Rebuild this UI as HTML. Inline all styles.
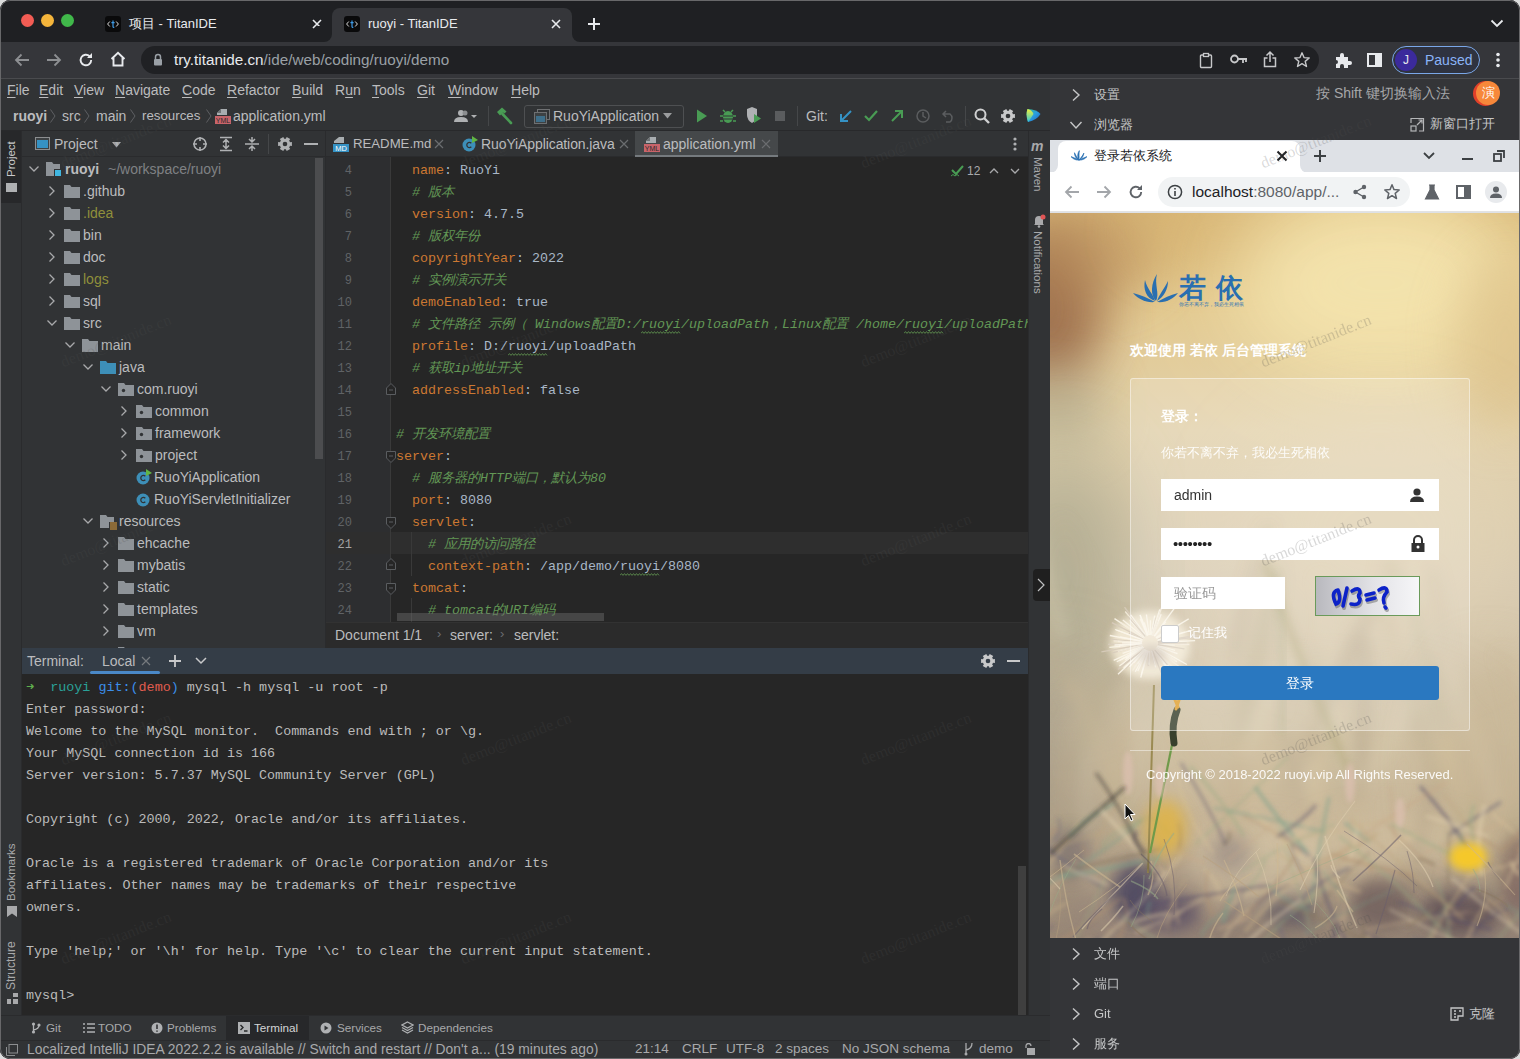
<!DOCTYPE html>
<html><head><meta charset="utf-8">
<style>
*{margin:0;padding:0;box-sizing:border-box}
html,body{width:1520px;height:1059px;overflow:hidden;background:#dcdcdc;font-family:"Liberation Sans",sans-serif;}
.a{position:absolute}
.mono{font-family:"Liberation Mono",monospace}
.ui{font-size:13px;color:#bbbcbe;white-space:nowrap}
svg{display:block}
</style></head><body>
<div id="root" class="a" style="left:0;top:0;width:1520px;height:1059px;border-radius:10px;overflow:hidden;background:#202124">

<!-- ===== Chrome tab strip ===== -->
<div id="tabstrip" class="a" style="left:0;top:0;width:1520px;height:42px;background:#1f2023;">
  <div class="a" style="left:21px;top:14px;width:13px;height:13px;border-radius:50%;background:#f25c54;"></div>
  <div class="a" style="left:41px;top:14px;width:13px;height:13px;border-radius:50%;background:#f5b53b;"></div>
  <div class="a" style="left:61px;top:14px;width:13px;height:13px;border-radius:50%;background:#40b84a;"></div>
  <!-- tab1 -->
  <div class="a" style="left:105px;top:16px;"><svg width="16" height="16"><rect width="16" height="16" rx="3" fill="#0a0a0b"/><path d="M4.8 5.5L2.6 8L4.8 10.5M11.2 5.5L13.4 8L11.2 10.5" stroke="#d8d8d8" stroke-width="1" fill="none"/><path d="M8 4.5V10.5Q8 11.6 9.3 11.4M6.4 6.6H9.6" stroke="#3f9be6" stroke-width="1.2" fill="none"/></svg></div>
  <div class="a ui" style="left:129px;top:16px;font-size:13px;line-height:16px;color:#e8eaed">项目 - TitanIDE</div>
  <div class="a" style="left:311px;top:18px;"><svg width="12" height="12"><path d="M2 2L10 10M10 2L2 10" stroke="#e8eaed" stroke-width="1.6"/></svg></div>
  <!-- tab2 active -->
  <div class="a" style="left:332px;top:8px;width:240px;height:34px;background:#35363a;border-radius:8px 8px 0 0;"></div>
  <div class="a" style="left:324px;top:34px;width:8px;height:8px;background:#35363a;"></div>
  <div class="a" style="left:316px;top:26px;width:16px;height:16px;background:#1f2023;border-radius:0 0 8px 0;"></div>
  <div class="a" style="left:572px;top:34px;width:8px;height:8px;background:#35363a;"></div>
  <div class="a" style="left:572px;top:26px;width:16px;height:16px;background:#1f2023;border-radius:0 0 0 8px;"></div>
  <div class="a" style="left:344px;top:16px;"><svg width="16" height="16"><rect width="16" height="16" rx="3" fill="#0a0a0b"/><path d="M4.8 5.5L2.6 8L4.8 10.5M11.2 5.5L13.4 8L11.2 10.5" stroke="#d8d8d8" stroke-width="1" fill="none"/><path d="M8 4.5V10.5Q8 11.6 9.3 11.4M6.4 6.6H9.6" stroke="#3f9be6" stroke-width="1.2" fill="none"/></svg></div>
  <div class="a ui" style="left:368px;top:16px;font-size:13px;line-height:16px;color:#e8eaed">ruoyi - TitanIDE</div>
  <div class="a" style="left:550px;top:18px;"><svg width="12" height="12"><path d="M2 2L10 10M10 2L2 10" stroke="#e8eaed" stroke-width="1.6"/></svg></div>
  <div class="a" style="left:587px;top:17px;"><svg width="14" height="14"><path d="M7 1V13M1 7H13" stroke="#e8eaed" stroke-width="2"/></svg></div>
  <div class="a" style="left:1490px;top:19px;"><svg width="14" height="9"><path d="M1.5 1.5L7 7L12.5 1.5" stroke="#e8eaed" stroke-width="1.8" fill="none"/></svg></div>
</div>

<!-- ===== Chrome toolbar ===== -->
<div id="toolbar" class="a" style="left:0;top:42px;width:1520px;height:37px;background:#35363a;border-bottom:1px solid #4a4b4e;">
  <div class="a" style="left:13px;top:10px;"><svg width="18" height="16"><path d="M16 8H3M8.5 2.5L3 8L8.5 13.5" stroke="#8d8f92" stroke-width="1.8" fill="none"/></svg></div>
  <div class="a" style="left:45px;top:10px;"><svg width="18" height="16"><path d="M2 8H15M9.5 2.5L15 8L9.5 13.5" stroke="#8d8f92" stroke-width="1.8" fill="none"/></svg></div>
  <div class="a" style="left:77px;top:9px;"><svg width="18" height="18"><path d="M14.2 9A5.3 5.3 0 1 1 12.6 5.2" stroke="#e8eaed" stroke-width="1.9" fill="none"/><path d="M15 2V7H10Z" fill="#e8eaed"/></svg></div>
  <div class="a" style="left:109px;top:8px;"><svg width="18" height="18"><path d="M2.5 9L9 2.8L15.5 9M4.5 7.5V15.5H13.5V7.5" stroke="#e8eaed" stroke-width="1.9" fill="none" stroke-linejoin="miter"/></svg></div>
  <div class="a" style="left:141px;top:4px;width:1178px;height:28px;border-radius:14px;background:#202124;"></div>
  <div class="a" style="left:153px;top:11px;"><svg width="10" height="13"><path d="M2.5 6V4A2.5 2.5 0 0 1 7.5 4V6" stroke="#9aa0a6" stroke-width="1.5" fill="none"/><rect x="1" y="6" width="8" height="6.5" rx="1" fill="#9aa0a6"/></svg></div>
  <div class="a ui" style="left:174px;top:9px;font-size:15.25px;line-height:18px;color:#e8eaed">try.titanide.cn<span style="color:#9aa0a6">/ide/web/coding/ruoyi/demo</span></div>
  <div class="a" style="left:1199px;top:10px;"><svg width="14" height="17"><rect x="1.5" y="3" width="11" height="12.5" rx="1" stroke="#c7c8ca" stroke-width="1.4" fill="none"/><rect x="4.5" y="1.5" width="5" height="3" stroke="#c7c8ca" stroke-width="1.3" fill="#202124"/></svg></div>
  <div class="a" style="left:1230px;top:12px;"><svg width="18" height="12"><circle cx="4.5" cy="5" r="3.5" stroke="#c7c8ca" stroke-width="1.8" fill="none"/><path d="M8 5H17M13 5V9M16 5V8" stroke="#c7c8ca" stroke-width="1.8"/></svg></div>
  <div class="a" style="left:1263px;top:8px;"><svg width="14" height="18"><path d="M7 12V2M3.5 5.5L7 2L10.5 5.5M4.5 8H1.5V16.5H12.5V8H9.5" stroke="#c7c8ca" stroke-width="1.5" fill="none"/></svg></div>
  <div class="a" style="left:1293px;top:9px;"><svg width="18" height="18"><path d="M9 1.8L11 6.6L16.2 7L12.2 10.4L13.5 15.5L9 12.7L4.5 15.5L5.8 10.4L1.8 7L7 6.6Z" stroke="#c7c8ca" stroke-width="1.4" fill="none" stroke-linejoin="round"/></svg></div>
  <div class="a" style="left:1334px;top:9px;"><svg width="18" height="18"><path d="M2 6H6V4A2 2 0 0 1 10 4V6H14V10H16A2 2 0 0 1 16 14H14V17H10V15A2 2 0 0 0 6 15V17H2V13A2 2 0 0 0 2 9Z" fill="#e8eaed"/></svg></div>
  <div class="a" style="left:1367px;top:11px;width:15px;height:14px;border:2px solid #e8eaed;"><div class="a" style="left:6px;top:0;width:5px;height:10px;background:#e8eaed"></div></div>
  <div class="a" style="left:1392px;top:4px;width:88px;height:28px;border-radius:14px;border:1.5px solid #7aa7e8;background:#2f3340;"></div>
  <div class="a" style="left:1395px;top:7px;width:22px;height:22px;border-radius:50%;background:#3b2a9c;color:#e8eaed;font-size:12px;line-height:22px;text-align:center">J</div>
  <div class="a ui" style="left:1425px;top:10px;font-size:14px;line-height:16px;color:#8ab4f8">Paused</div>
  <div class="a" style="left:1496px;top:10px;"><svg width="4" height="16"><circle cx="2" cy="2.5" r="1.8" fill="#e8eaed"/><circle cx="2" cy="8" r="1.8" fill="#e8eaed"/><circle cx="2" cy="13.5" r="1.8" fill="#e8eaed"/></svg></div>
</div>

<div id="ide" class="a" style="left:0;top:79px;width:1050px;height:980px;background:#313335;overflow:hidden">
<div class="a" style="left:0;top:-79px;width:1050px;height:1059px;">
<div class="a" style="left:7px;top:80.0px;line-height:20px;font-size:14px;color:#bbbcbe;white-space:pre;"><u style="text-underline-offset:2px">F</u>ile</div>
<div class="a" style="left:39px;top:80.0px;line-height:20px;font-size:14px;color:#bbbcbe;white-space:pre;"><u style="text-underline-offset:2px">E</u>dit</div>
<div class="a" style="left:74px;top:80.0px;line-height:20px;font-size:14px;color:#bbbcbe;white-space:pre;"><u style="text-underline-offset:2px">V</u>iew</div>
<div class="a" style="left:115px;top:80.0px;line-height:20px;font-size:14px;color:#bbbcbe;white-space:pre;"><u style="text-underline-offset:2px">N</u>avigate</div>
<div class="a" style="left:182px;top:80.0px;line-height:20px;font-size:14px;color:#bbbcbe;white-space:pre;"><u style="text-underline-offset:2px">C</u>ode</div>
<div class="a" style="left:227px;top:80.0px;line-height:20px;font-size:14px;color:#bbbcbe;white-space:pre;"><u style="text-underline-offset:2px">R</u>efactor</div>
<div class="a" style="left:292px;top:80.0px;line-height:20px;font-size:14px;color:#bbbcbe;white-space:pre;"><u style="text-underline-offset:2px">B</u>uild</div>
<div class="a" style="left:335px;top:80.0px;line-height:20px;font-size:14px;color:#bbbcbe;white-space:pre;">R<u style="text-underline-offset:2px">u</u>n</div>
<div class="a" style="left:372px;top:80.0px;line-height:20px;font-size:14px;color:#bbbcbe;white-space:pre;"><u style="text-underline-offset:2px">T</u>ools</div>
<div class="a" style="left:417px;top:80.0px;line-height:20px;font-size:14px;color:#bbbcbe;white-space:pre;"><u style="text-underline-offset:2px">G</u>it</div>
<div class="a" style="left:448px;top:80.0px;line-height:20px;font-size:14px;color:#bbbcbe;white-space:pre;"><u style="text-underline-offset:2px">W</u>indow</div>
<div class="a" style="left:511px;top:80.0px;line-height:20px;font-size:14px;color:#bbbcbe;white-space:pre;"><u style="text-underline-offset:2px">H</u>elp</div>
<div class="a" style="left:13px;top:106.0px;line-height:20px;font-size:14px;color:#bbbcbe;white-space:pre;font-weight:bold">ruoyi</div>
<div class="a" style="left:50px;top:109px"><svg width="6" height="14"><path d="M0.5 0.5L5 7L0.5 13.5" stroke="#5e6063" stroke-width="1" fill="none"/></svg></div>
<div class="a" style="left:84px;top:109px"><svg width="6" height="14"><path d="M0.5 0.5L5 7L0.5 13.5" stroke="#5e6063" stroke-width="1" fill="none"/></svg></div>
<div class="a" style="left:130px;top:109px"><svg width="6" height="14"><path d="M0.5 0.5L5 7L0.5 13.5" stroke="#5e6063" stroke-width="1" fill="none"/></svg></div>
<div class="a" style="left:206px;top:109px"><svg width="6" height="14"><path d="M0.5 0.5L5 7L0.5 13.5" stroke="#5e6063" stroke-width="1" fill="none"/></svg></div>
<div class="a" style="left:62px;top:106.0px;line-height:20px;font-size:14px;color:#bbbcbe;white-space:pre;">src</div>
<div class="a" style="left:96px;top:106.0px;line-height:20px;font-size:14px;color:#bbbcbe;white-space:pre;">main</div>
<div class="a" style="left:142px;top:106.0px;line-height:20px;font-size:13.3px;color:#bbbcbe;white-space:pre;">resources</div>
<div class="a" style="left:215px;top:108px"><svg width="16" height="16"><path d="M6 1H12V7H2V5Z" fill="#a8adb0"/><path d="M2 5L6 1V5Z" fill="#6e7275"/><rect x="0" y="8" width="16" height="8" fill="#c9646a"/><text x="8" y="15" font-size="7" font-family="Liberation Sans" fill="#2b2b2b" text-anchor="middle">YML</text></svg></div>
<div class="a" style="left:233px;top:106.0px;line-height:20px;font-size:14px;color:#bbbcbe;white-space:pre;">application.yml</div>
<div class="a" style="left:453px;top:109px"><svg width="26" height="14"><circle cx="8" cy="4" r="3" fill="#afb1b3"/><path d="M1 13Q1 8 8 8Q15 8 15 13Z" fill="#afb1b3"/><circle cx="12" cy="4" r="2.5" fill="#8c8e90"/><path d="M18 6H24L21 9Z" fill="#afb1b3"/></svg></div>
<div class="a" style="left:488px;top:106px;width:1px;height:20px;background:#454749"></div>
<div class="a" style="left:495px;top:106px"><svg width="20" height="20"><path d="M2 6L7 1.5L11.5 5.5L9.5 7.5L8 6.5L5 9.5Z" fill="#499c54"/><path d="M7.5 8L16 17" stroke="#499c54" stroke-width="2.6" stroke-linecap="round"/></svg></div>
<div class="a" style="left:524px;top:105px;width:160px;height:23px;border:1px solid #4e5052;border-radius:3px"></div>
<div class="a" style="left:534px;top:109px"><svg width="16" height="15"><rect x="3.5" y="0.5" width="12" height="10" fill="none" stroke="#6e7072"/><rect x="0.5" y="3.5" width="12" height="11" fill="#3d4143" stroke="#6e7072"/><rect x="2" y="7" width="9" height="6" fill="#3f6f8a"/></svg></div>
<div class="a" style="left:553px;top:106.0px;line-height:20px;font-size:14px;color:#bbbcbe;white-space:pre;">RuoYiApplication</div>
<div class="a" style="left:663px;top:113px"><svg width="9" height="6"><path d="M0 0H9L4.5 5.5Z" fill="#9a9c9e"/></svg></div>
<div class="a" style="left:696px;top:109px"><svg width="12" height="14"><path d="M1 0.5L11 7L1 13.5Z" fill="#499c54"/></svg></div>
<div class="a" style="left:720px;top:107px"><svg width="16" height="17"><ellipse cx="8" cy="10" rx="5" ry="6" fill="#499c54"/><path d="M3 3L5 5M13 3L11 5M0 9H3M13 9H16M0 14H3M13 14H16" stroke="#499c54" stroke-width="1.5"/><path d="M3 9H13M3 12H13" stroke="#313335" stroke-width="1"/></svg></div>
<div class="a" style="left:746px;top:107px"><svg width="16" height="17"><path d="M1 2L6 0L11 2V8Q11 13 6 16Q1 13 1 8Z" fill="#afb1b3"/><path d="M6 0V16" stroke="#313335" stroke-width="0"/><path d="M8 7L15 11.5L8 16Z" fill="#499c54"/></svg></div>
<div class="a" style="left:775px;top:111px;width:10px;height:10px;background:#5a5c5e"></div>
<div class="a" style="left:797px;top:106px;width:1px;height:20px;background:#454749"></div>
<div class="a" style="left:806px;top:106.0px;line-height:20px;font-size:14px;color:#bbbcbe;white-space:pre;">Git:</div>
<div class="a" style="left:838px;top:108px"><svg width="16" height="16"><path d="M13 3L3 13M3 6V13H10" stroke="#3592c4" stroke-width="2" fill="none"/></svg></div>
<div class="a" style="left:863px;top:108px"><svg width="16" height="16"><path d="M2 8L6 12L14 3" stroke="#499c54" stroke-width="2.2" fill="none"/></svg></div>
<div class="a" style="left:889px;top:108px"><svg width="16" height="16"><path d="M3 13L13 3M6 3H13V10" stroke="#499c54" stroke-width="2" fill="none"/></svg></div>
<div class="a" style="left:915px;top:108px"><svg width="16" height="16"><circle cx="8" cy="8" r="6" stroke="#5b5d5f" stroke-width="1.5" fill="none"/><path d="M8 4V8L11 10" stroke="#5b5d5f" stroke-width="1.5" fill="none"/></svg></div>
<div class="a" style="left:941px;top:108px"><svg width="16" height="16"><path d="M5 3L2 6L5 9M2 6H9A5 5 0 0 1 9 14H5" stroke="#5b5d5f" stroke-width="1.5" fill="none"/></svg></div>
<div class="a" style="left:965px;top:106px;width:1px;height:20px;background:#454749"></div>
<div class="a" style="left:974px;top:108px"><svg width="16" height="16"><circle cx="6.5" cy="6.5" r="5" stroke="#cfd0d1" stroke-width="2" fill="none"/><path d="M10 10L15 15" stroke="#cfd0d1" stroke-width="2.4"/></svg></div>
<div class="a" style="left:1000px;top:108px"><svg width="16" height="16" viewBox="0 0 16 16"><path d="M12.96 6.13L14.90 5.96L14.90 10.04L12.96 9.87L12.59 10.65L12.10 11.36L13.22 12.96L9.68 15.00L8.86 13.23L8.00 13.30L7.14 13.23L6.32 15.00L2.78 12.96L3.90 11.36L3.41 10.65L3.04 9.87L1.10 10.04L1.10 5.96L3.04 6.13L3.41 5.35L3.90 4.64L2.78 3.04L6.32 1.00L7.14 2.77L8.00 2.70L8.86 2.77L9.68 1.00L13.22 3.04L12.10 4.64L12.59 5.35Z" fill="#c8c9ca"/><circle cx="8" cy="8" r="2.3" fill="#313335"/></svg></div>
<div class="a" style="left:1026px;top:108px"><svg width="16" height="15" viewBox="0 0 16 15"><defs><linearGradient id="lg1" x1="0" y1="0" x2="0" y2="1"><stop offset="0" stop-color="#f2f03a"/><stop offset="1" stop-color="#2ec6d8"/></linearGradient><linearGradient id="lg2" x1="0" y1="0" x2="1" y2="1"><stop offset="0" stop-color="#34c08a"/><stop offset="0.5" stop-color="#2a9ee0"/><stop offset="1" stop-color="#1c5fc0"/></linearGradient></defs><path d="M1.5 1Q11 1.5 14.5 6Q11 12 2 14Q-0.5 7 1.5 1Z" fill="url(#lg2)"/><path d="M1.5 1Q6 2 7.5 6Q5 10 2 14Q-0.5 7 1.5 1Z" fill="url(#lg1)"/></svg></div>
<div class="a" style="left:0;top:130px;width:1050px;height:1px;background:#28292b"></div>
<div class="a" style="left:0;top:131px;width:22px;height:909px;background:#313335;border-right:1px solid #2a2b2d"></div>
<div class="a" style="left:1px;top:131px;width:20px;height:72px;background:#27282a"></div>
<div class="a" style="left:3px;top:177px;width:70px;height:16px;transform-origin:0 0;transform:rotate(-90deg);font-size:11.5px;line-height:16px;color:#c9cacb;white-space:nowrap">Project</div>
<div class="a" style="left:6px;top:183px;width:11px;height:9px;background:#afb1b3"></div>
<div class="a" style="left:3px;top:901px;width:70px;height:16px;transform-origin:0 0;transform:rotate(-90deg);font-size:11.5px;line-height:16px;color:#a8a9ab;white-space:nowrap">Bookmarks</div>
<div class="a" style="left:7px;top:906px"><svg width="10" height="11"><path d="M0 0H10V11L5 7.5L0 11Z" fill="#a8a9ab"/></svg></div>
<div class="a" style="left:3px;top:990px;width:70px;height:16px;transform-origin:0 0;transform:rotate(-90deg);font-size:12px;line-height:16px;color:#a8a9ab;white-space:nowrap">Structure</div>
<div class="a" style="left:7px;top:993px"><svg width="11" height="11"><rect x="6" y="0" width="5" height="4" fill="#a8a9ab"/><rect x="0" y="6" width="4" height="5" fill="#a8a9ab"/><rect x="6" y="6" width="5" height="5" fill="#a8a9ab"/></svg></div>
<div class="a" style="left:22px;top:131px;width:303px;height:26px;background:#313335;border-bottom:1px solid #2a2b2d"></div>
<div class="a" style="left:35px;top:137px"><svg width="15" height="13"><rect x="0.5" y="0.5" width="14" height="12" fill="#3d4143" stroke="#8c8e90"/><rect x="2" y="3" width="11" height="8" fill="#3592c4"/></svg></div>
<div class="a" style="left:54px;top:134.0px;line-height:20px;font-size:14px;color:#bbbcbe;white-space:pre;">Project</div>
<div class="a" style="left:112px;top:142px"><svg width="9" height="6"><path d="M0 0H9L4.5 5.5Z" fill="#afb1b3"/></svg></div>
<div class="a" style="left:192px;top:136px"><svg width="16" height="16"><circle cx="8" cy="8" r="6" stroke="#afb1b3" stroke-width="1.6" fill="none"/><path d="M8 1V5M8 11V15M1 8H5M11 8H15" stroke="#afb1b3" stroke-width="1.6"/></svg></div>
<div class="a" style="left:218px;top:136px"><svg width="16" height="16"><path d="M2 1.5H14M2 14.5H14M8 4V12M5 6.5L8 3.5L11 6.5M5 9.5L8 12.5L11 9.5" stroke="#afb1b3" stroke-width="1.5" fill="none"/></svg></div>
<div class="a" style="left:244px;top:136px"><svg width="16" height="16"><path d="M1 8H15M8 1V5.5M8 10.5V15M5 3L8 6L11 3M5 13L8 10L11 13" stroke="#afb1b3" stroke-width="1.5" fill="none"/></svg></div>
<div class="a" style="left:268px;top:134px;width:1px;height:20px;background:#454749"></div>
<div class="a" style="left:277px;top:136px"><svg width="16" height="16" viewBox="0 0 16 16"><path d="M12.96 6.13L14.90 5.96L14.90 10.04L12.96 9.87L12.59 10.65L12.10 11.36L13.22 12.96L9.68 15.00L8.86 13.23L8.00 13.30L7.14 13.23L6.32 15.00L2.78 12.96L3.90 11.36L3.41 10.65L3.04 9.87L1.10 10.04L1.10 5.96L3.04 6.13L3.41 5.35L3.90 4.64L2.78 3.04L6.32 1.00L7.14 2.77L8.00 2.70L8.86 2.77L9.68 1.00L13.22 3.04L12.10 4.64L12.59 5.35Z" fill="#afb1b3"/><circle cx="8" cy="8" r="2.3" fill="#313335"/></svg></div>
<div class="a" style="left:304px;top:143px;width:14px;height:2px;background:#afb1b3"></div>
<div class="a" style="left:325px;top:131px;width:1px;height:517px;background:#2a2b2d"></div>
<div class="a" style="left:28px;top:165px"><svg width="12" height="8"><path d="M1.5 1.5L6 6L10.5 1.5" stroke="#a8a9ab" stroke-width="1.3" fill="none"/></svg></div>
<div class="a" style="left:46px;top:161px"><svg width="16" height="16"><path d="M0 1H6L7.5 3H14V8H8V15H0Z" fill="#8e9398"/><rect x="9" y="9" width="6" height="6" fill="#40b6e0"/></svg></div>
<div class="a" style="left:65px;top:159.0px;line-height:20px;font-size:14px;color:#bbbcbe;white-space:pre;font-weight:bold">ruoyi</div>
<div class="a" style="left:108px;top:159.0px;line-height:20px;font-size:14px;color:#7f8184;white-space:pre;">~/workspace/ruoyi</div>
<div class="a" style="left:48px;top:185px"><svg width="8" height="12"><path d="M1.5 1.5L6 6L1.5 10.5" stroke="#a8a9ab" stroke-width="1.3" fill="none"/></svg></div>
<div class="a" style="left:64px;top:184px"><svg width="16" height="14"><path d="M0 1H6L7.5 3H16V14H0Z" fill="#8e9398"/></svg></div>
<div class="a" style="left:83px;top:181.0px;line-height:20px;font-size:14px;color:#bbbcbe;white-space:pre;">.github</div>
<div class="a" style="left:48px;top:207px"><svg width="8" height="12"><path d="M1.5 1.5L6 6L1.5 10.5" stroke="#a8a9ab" stroke-width="1.3" fill="none"/></svg></div>
<div class="a" style="left:64px;top:206px"><svg width="16" height="14"><path d="M0 1H6L7.5 3H16V14H0Z" fill="#8e9398"/></svg></div>
<div class="a" style="left:83px;top:203.0px;line-height:20px;font-size:14px;color:#8f8f3b;white-space:pre;">.idea</div>
<div class="a" style="left:48px;top:229px"><svg width="8" height="12"><path d="M1.5 1.5L6 6L1.5 10.5" stroke="#a8a9ab" stroke-width="1.3" fill="none"/></svg></div>
<div class="a" style="left:64px;top:228px"><svg width="16" height="14"><path d="M0 1H6L7.5 3H16V14H0Z" fill="#8e9398"/></svg></div>
<div class="a" style="left:83px;top:225.0px;line-height:20px;font-size:14px;color:#bbbcbe;white-space:pre;">bin</div>
<div class="a" style="left:48px;top:251px"><svg width="8" height="12"><path d="M1.5 1.5L6 6L1.5 10.5" stroke="#a8a9ab" stroke-width="1.3" fill="none"/></svg></div>
<div class="a" style="left:64px;top:250px"><svg width="16" height="14"><path d="M0 1H6L7.5 3H16V14H0Z" fill="#8e9398"/></svg></div>
<div class="a" style="left:83px;top:247.0px;line-height:20px;font-size:14px;color:#bbbcbe;white-space:pre;">doc</div>
<div class="a" style="left:48px;top:273px"><svg width="8" height="12"><path d="M1.5 1.5L6 6L1.5 10.5" stroke="#a8a9ab" stroke-width="1.3" fill="none"/></svg></div>
<div class="a" style="left:64px;top:272px"><svg width="16" height="14"><path d="M0 1H6L7.5 3H16V14H0Z" fill="#8e9398"/></svg></div>
<div class="a" style="left:83px;top:269.0px;line-height:20px;font-size:14px;color:#8f8f3b;white-space:pre;">logs</div>
<div class="a" style="left:48px;top:295px"><svg width="8" height="12"><path d="M1.5 1.5L6 6L1.5 10.5" stroke="#a8a9ab" stroke-width="1.3" fill="none"/></svg></div>
<div class="a" style="left:64px;top:294px"><svg width="16" height="14"><path d="M0 1H6L7.5 3H16V14H0Z" fill="#8e9398"/></svg></div>
<div class="a" style="left:83px;top:291.0px;line-height:20px;font-size:14px;color:#bbbcbe;white-space:pre;">sql</div>
<div class="a" style="left:46px;top:319px"><svg width="12" height="8"><path d="M1.5 1.5L6 6L10.5 1.5" stroke="#a8a9ab" stroke-width="1.3" fill="none"/></svg></div>
<div class="a" style="left:64px;top:316px"><svg width="16" height="14"><path d="M0 1H6L7.5 3H16V14H0Z" fill="#8e9398"/></svg></div>
<div class="a" style="left:83px;top:313.0px;line-height:20px;font-size:14px;color:#bbbcbe;white-space:pre;">src</div>
<div class="a" style="left:64px;top:341px"><svg width="12" height="8"><path d="M1.5 1.5L6 6L10.5 1.5" stroke="#a8a9ab" stroke-width="1.3" fill="none"/></svg></div>
<div class="a" style="left:82px;top:338px"><svg width="16" height="14"><path d="M0 1H6L7.5 3H16V14H0Z" fill="#8e9398"/></svg></div>
<div class="a" style="left:101px;top:335.0px;line-height:20px;font-size:14px;color:#bbbcbe;white-space:pre;">main</div>
<div class="a" style="left:82px;top:363px"><svg width="12" height="8"><path d="M1.5 1.5L6 6L10.5 1.5" stroke="#a8a9ab" stroke-width="1.3" fill="none"/></svg></div>
<div class="a" style="left:100px;top:360px"><svg width="16" height="14"><path d="M0 1H6L7.5 3H16V14H0Z" fill="#3d8fb8"/></svg></div>
<div class="a" style="left:119px;top:357.0px;line-height:20px;font-size:14px;color:#bbbcbe;white-space:pre;">java</div>
<div class="a" style="left:100px;top:385px"><svg width="12" height="8"><path d="M1.5 1.5L6 6L10.5 1.5" stroke="#a8a9ab" stroke-width="1.3" fill="none"/></svg></div>
<div class="a" style="left:118px;top:382px"><svg width="16" height="14"><path d="M0 1H6L7.5 3H16V14H0Z" fill="#8e9398"/><circle cx="5.5" cy="8.5" r="1.7" fill="#313335"/></svg></div>
<div class="a" style="left:137px;top:379.0px;line-height:20px;font-size:14px;color:#bbbcbe;white-space:pre;">com.ruoyi</div>
<div class="a" style="left:120px;top:405px"><svg width="8" height="12"><path d="M1.5 1.5L6 6L1.5 10.5" stroke="#a8a9ab" stroke-width="1.3" fill="none"/></svg></div>
<div class="a" style="left:136px;top:404px"><svg width="16" height="14"><path d="M0 1H6L7.5 3H16V14H0Z" fill="#8e9398"/><circle cx="5.5" cy="8.5" r="1.7" fill="#313335"/></svg></div>
<div class="a" style="left:155px;top:401.0px;line-height:20px;font-size:14px;color:#bbbcbe;white-space:pre;">common</div>
<div class="a" style="left:120px;top:427px"><svg width="8" height="12"><path d="M1.5 1.5L6 6L1.5 10.5" stroke="#a8a9ab" stroke-width="1.3" fill="none"/></svg></div>
<div class="a" style="left:136px;top:426px"><svg width="16" height="14"><path d="M0 1H6L7.5 3H16V14H0Z" fill="#8e9398"/><circle cx="5.5" cy="8.5" r="1.7" fill="#313335"/></svg></div>
<div class="a" style="left:155px;top:423.0px;line-height:20px;font-size:14px;color:#bbbcbe;white-space:pre;">framework</div>
<div class="a" style="left:120px;top:449px"><svg width="8" height="12"><path d="M1.5 1.5L6 6L1.5 10.5" stroke="#a8a9ab" stroke-width="1.3" fill="none"/></svg></div>
<div class="a" style="left:136px;top:448px"><svg width="16" height="14"><path d="M0 1H6L7.5 3H16V14H0Z" fill="#8e9398"/><circle cx="5.5" cy="8.5" r="1.7" fill="#313335"/></svg></div>
<div class="a" style="left:155px;top:445.0px;line-height:20px;font-size:14px;color:#bbbcbe;white-space:pre;">project</div>
<div class="a" style="left:136px;top:469px"><svg width="16" height="16"><circle cx="7" cy="9" r="6.5" fill="#3d8fb8"/><path d="M9.3 7.2A2.6 2.6 0 1 0 9.3 10.8" stroke="#313335" stroke-width="1.3" fill="none"/><path d="M10 0L16 4L10 7Z" fill="#62b543"/></svg></div>
<div class="a" style="left:154px;top:467.0px;line-height:20px;font-size:14px;color:#bbbcbe;white-space:pre;">RuoYiApplication</div>
<div class="a" style="left:136px;top:491px"><svg width="16" height="16"><circle cx="7" cy="9" r="6.5" fill="#3d8fb8"/><path d="M9.3 7.2A2.6 2.6 0 1 0 9.3 10.8" stroke="#313335" stroke-width="1.3" fill="none"/></svg></div>
<div class="a" style="left:154px;top:489.0px;line-height:20px;font-size:14px;color:#bbbcbe;white-space:pre;">RuoYiServletInitializer</div>
<div class="a" style="left:82px;top:517px"><svg width="12" height="8"><path d="M1.5 1.5L6 6L10.5 1.5" stroke="#a8a9ab" stroke-width="1.3" fill="none"/></svg></div>
<div class="a" style="left:100px;top:514px"><svg width="18" height="16"><path d="M0 1H6L7.5 3H14V8H9V14H0Z" fill="#8e9398"/><path d="M10 9H17M10 11H17M10 13H17M10 15H17" stroke="#e6a23c" stroke-width="1.2"/></svg></div>
<div class="a" style="left:119px;top:511.0px;line-height:20px;font-size:14px;color:#bbbcbe;white-space:pre;">resources</div>
<div class="a" style="left:102px;top:537px"><svg width="8" height="12"><path d="M1.5 1.5L6 6L1.5 10.5" stroke="#a8a9ab" stroke-width="1.3" fill="none"/></svg></div>
<div class="a" style="left:118px;top:536px"><svg width="16" height="14"><path d="M0 1H6L7.5 3H16V14H0Z" fill="#8e9398"/></svg></div>
<div class="a" style="left:137px;top:533.0px;line-height:20px;font-size:14px;color:#bbbcbe;white-space:pre;">ehcache</div>
<div class="a" style="left:102px;top:559px"><svg width="8" height="12"><path d="M1.5 1.5L6 6L1.5 10.5" stroke="#a8a9ab" stroke-width="1.3" fill="none"/></svg></div>
<div class="a" style="left:118px;top:558px"><svg width="16" height="14"><path d="M0 1H6L7.5 3H16V14H0Z" fill="#8e9398"/></svg></div>
<div class="a" style="left:137px;top:555.0px;line-height:20px;font-size:14px;color:#bbbcbe;white-space:pre;">mybatis</div>
<div class="a" style="left:102px;top:581px"><svg width="8" height="12"><path d="M1.5 1.5L6 6L1.5 10.5" stroke="#a8a9ab" stroke-width="1.3" fill="none"/></svg></div>
<div class="a" style="left:118px;top:580px"><svg width="16" height="14"><path d="M0 1H6L7.5 3H16V14H0Z" fill="#8e9398"/></svg></div>
<div class="a" style="left:137px;top:577.0px;line-height:20px;font-size:14px;color:#bbbcbe;white-space:pre;">static</div>
<div class="a" style="left:102px;top:603px"><svg width="8" height="12"><path d="M1.5 1.5L6 6L1.5 10.5" stroke="#a8a9ab" stroke-width="1.3" fill="none"/></svg></div>
<div class="a" style="left:118px;top:602px"><svg width="16" height="14"><path d="M0 1H6L7.5 3H16V14H0Z" fill="#8e9398"/></svg></div>
<div class="a" style="left:137px;top:599.0px;line-height:20px;font-size:14px;color:#bbbcbe;white-space:pre;">templates</div>
<div class="a" style="left:102px;top:625px"><svg width="8" height="12"><path d="M1.5 1.5L6 6L1.5 10.5" stroke="#a8a9ab" stroke-width="1.3" fill="none"/></svg></div>
<div class="a" style="left:118px;top:624px"><svg width="16" height="14"><path d="M0 1H6L7.5 3H16V14H0Z" fill="#8e9398"/></svg></div>
<div class="a" style="left:137px;top:621.0px;line-height:20px;font-size:14px;color:#bbbcbe;white-space:pre;">vm</div>
<div class="a" style="left:102px;top:647px"><svg width="8" height="12"><path d="M1.5 1.5L6 6L1.5 10.5" stroke="#a8a9ab" stroke-width="1.3" fill="none"/></svg></div>
<div class="a" style="left:118px;top:646px"><svg width="16" height="14"><path d="M0 1H6L7.5 3H16V14H0Z" fill="#8e9398"/></svg></div>
<div class="a" style="left:315px;top:158px;width:8px;height:301px;background:#4c4d4f;border-radius:0"></div>
<div class="a" style="left:326px;top:131px;width:702px;height:26px;background:#313335;border-bottom:1px solid #2a2b2d"></div>
<div class="a" style="left:333px;top:136px"><svg width="16" height="16"><path d="M6 1H11V7H1V5Z" fill="#a8adb0"/><rect x="0" y="8" width="16" height="8" fill="#3592c4"/><text x="8" y="15" font-size="7.5" font-family="Liberation Sans" fill="#fff" text-anchor="middle">MD</text></svg></div>
<div class="a" style="left:353px;top:134.0px;line-height:20px;font-size:13.2px;color:#bbbcbe;white-space:pre;">README.md</div>
<div class="a" style="left:434px;top:139px"><svg width="10" height="10"><path d="M1 1L9 9M9 1L1 9" stroke="#6b6d70" stroke-width="1.2"/></svg></div>
<div class="a" style="left:462px;top:136px"><svg width="16" height="16"><circle cx="7" cy="9" r="6.5" fill="#3d8fb8"/><path d="M9.3 7.2A2.6 2.6 0 1 0 9.3 10.8" stroke="#313335" stroke-width="1.3" fill="none"/><path d="M10 0L16 4L10 7Z" fill="#62b543"/></svg></div>
<div class="a" style="left:481px;top:134.0px;line-height:20px;font-size:14px;color:#bbbcbe;white-space:pre;letter-spacing:-0.1px">RuoYiApplication.java</div>
<div class="a" style="left:619px;top:139px"><svg width="10" height="10"><path d="M1 1L9 9M9 1L1 9" stroke="#6b6d70" stroke-width="1.2"/></svg></div>
<div class="a" style="left:635px;top:131px;width:143px;height:27px;background:#45484a"></div>
<div class="a" style="left:635px;top:155px;width:143px;height:3px;background:#757a7e"></div>
<div class="a" style="left:644px;top:136px"><svg width="16" height="16"><path d="M6 1H12V7H2V5Z" fill="#a8adb0"/><path d="M2 5L6 1V5Z" fill="#6e7275"/><rect x="0" y="8" width="16" height="8" fill="#c9646a"/><text x="8" y="15" font-size="7" font-family="Liberation Sans" fill="#2b2b2b" text-anchor="middle">YML</text></svg></div>
<div class="a" style="left:663px;top:134.0px;line-height:20px;font-size:14px;color:#bbbcbe;white-space:pre;">application.yml</div>
<div class="a" style="left:761px;top:139px"><svg width="10" height="10"><path d="M1 1L9 9M9 1L1 9" stroke="#6b6d70" stroke-width="1.2"/></svg></div>
<div class="a" style="left:1013px;top:137px"><svg width="4" height="14"><circle cx="2" cy="2" r="1.6" fill="#afb1b3"/><circle cx="2" cy="7" r="1.6" fill="#afb1b3"/><circle cx="2" cy="12" r="1.6" fill="#afb1b3"/></svg></div>
<div class="a" style="left:326px;top:157px;width:702px;height:465px;background:#262626;overflow:hidden">
<div class="a" style="left:-326px;top:-157px;width:1050px;height:1059px">
<div class="a" style="left:326px;top:157px;width:64px;height:465px;background:#2d2e30"></div>
<div class="a" style="left:326px;top:532px;width:702px;height:22px;background:#2e2e2e"></div>
<div class="a" style="left:390px;top:157px;width:1px;height:465px;background:#3a3a3a"></div>
<div class="a mono" style="left:322px;top:160px;width:30px;height:22px;line-height:22px;font-size:12px;color:#606366;text-align:right">4</div>
<div class="a mono" style="left:412px;top:160px;height:22px;line-height:22px;font-size:13.33px;white-space:pre"><span style="color:#cc7832;">name</span><span style="color:#a9b7c6;">: </span><span style="color:#a9b7c6;">RuoYi</span></div>
<div class="a mono" style="left:322px;top:182px;width:30px;height:22px;line-height:22px;font-size:12px;color:#606366;text-align:right">5</div>
<div class="a mono" style="left:412px;top:182px;height:22px;line-height:22px;font-size:13.33px;white-space:pre"><span style="color:#629755;font-style:italic"># 版本</span></div>
<div class="a mono" style="left:322px;top:204px;width:30px;height:22px;line-height:22px;font-size:12px;color:#606366;text-align:right">6</div>
<div class="a mono" style="left:412px;top:204px;height:22px;line-height:22px;font-size:13.33px;white-space:pre"><span style="color:#cc7832;">version</span><span style="color:#a9b7c6;">: </span><span style="color:#a9b7c6;">4.7.5</span></div>
<div class="a mono" style="left:322px;top:226px;width:30px;height:22px;line-height:22px;font-size:12px;color:#606366;text-align:right">7</div>
<div class="a mono" style="left:412px;top:226px;height:22px;line-height:22px;font-size:13.33px;white-space:pre"><span style="color:#629755;font-style:italic"># 版权年份</span></div>
<div class="a mono" style="left:322px;top:248px;width:30px;height:22px;line-height:22px;font-size:12px;color:#606366;text-align:right">8</div>
<div class="a mono" style="left:412px;top:248px;height:22px;line-height:22px;font-size:13.33px;white-space:pre"><span style="color:#cc7832;">copyrightYear</span><span style="color:#a9b7c6;">: </span><span style="color:#a9b7c6;">2022</span></div>
<div class="a mono" style="left:322px;top:270px;width:30px;height:22px;line-height:22px;font-size:12px;color:#606366;text-align:right">9</div>
<div class="a mono" style="left:412px;top:270px;height:22px;line-height:22px;font-size:13.33px;white-space:pre"><span style="color:#629755;font-style:italic"># 实例演示开关</span></div>
<div class="a mono" style="left:322px;top:292px;width:30px;height:22px;line-height:22px;font-size:12px;color:#606366;text-align:right">10</div>
<div class="a mono" style="left:412px;top:292px;height:22px;line-height:22px;font-size:13.33px;white-space:pre"><span style="color:#cc7832;">demoEnabled</span><span style="color:#a9b7c6;">: </span><span style="color:#a9b7c6;">true</span></div>
<div class="a mono" style="left:322px;top:314px;width:30px;height:22px;line-height:22px;font-size:12px;color:#606366;text-align:right">11</div>
<div class="a mono" style="left:412px;top:314px;height:22px;line-height:22px;font-size:13.33px;white-space:pre"><span style="color:#629755;font-style:italic"># 文件路径 示例（ Windows配置D:/ruoyi/uploadPath，Linux配置 /home/ruoyi/uploadPath</span></div>
<div class="a mono" style="left:322px;top:336px;width:30px;height:22px;line-height:22px;font-size:12px;color:#606366;text-align:right">12</div>
<div class="a mono" style="left:412px;top:336px;height:22px;line-height:22px;font-size:13.33px;white-space:pre"><span style="color:#cc7832;">profile</span><span style="color:#a9b7c6;">: </span><span style="color:#a9b7c6;">D:/ruoyi/uploadPath</span></div>
<div class="a mono" style="left:322px;top:358px;width:30px;height:22px;line-height:22px;font-size:12px;color:#606366;text-align:right">13</div>
<div class="a mono" style="left:412px;top:358px;height:22px;line-height:22px;font-size:13.33px;white-space:pre"><span style="color:#629755;font-style:italic"># 获取ip地址开关</span></div>
<div class="a mono" style="left:322px;top:380px;width:30px;height:22px;line-height:22px;font-size:12px;color:#606366;text-align:right">14</div>
<div class="a mono" style="left:412px;top:380px;height:22px;line-height:22px;font-size:13.33px;white-space:pre"><span style="color:#cc7832;">addressEnabled</span><span style="color:#a9b7c6;">: </span><span style="color:#a9b7c6;">false</span></div>
<div class="a mono" style="left:322px;top:402px;width:30px;height:22px;line-height:22px;font-size:12px;color:#606366;text-align:right">15</div>
<div class="a mono" style="left:322px;top:424px;width:30px;height:22px;line-height:22px;font-size:12px;color:#606366;text-align:right">16</div>
<div class="a mono" style="left:396px;top:424px;height:22px;line-height:22px;font-size:13.33px;white-space:pre"><span style="color:#629755;font-style:italic"># 开发环境配置</span></div>
<div class="a mono" style="left:322px;top:446px;width:30px;height:22px;line-height:22px;font-size:12px;color:#606366;text-align:right">17</div>
<div class="a mono" style="left:396px;top:446px;height:22px;line-height:22px;font-size:13.33px;white-space:pre"><span style="color:#cc7832;">server</span><span style="color:#a9b7c6;">:</span></div>
<div class="a mono" style="left:322px;top:468px;width:30px;height:22px;line-height:22px;font-size:12px;color:#606366;text-align:right">18</div>
<div class="a mono" style="left:412px;top:468px;height:22px;line-height:22px;font-size:13.33px;white-space:pre"><span style="color:#629755;font-style:italic"># 服务器的HTTP端口，默认为80</span></div>
<div class="a mono" style="left:322px;top:490px;width:30px;height:22px;line-height:22px;font-size:12px;color:#606366;text-align:right">19</div>
<div class="a mono" style="left:412px;top:490px;height:22px;line-height:22px;font-size:13.33px;white-space:pre"><span style="color:#cc7832;">port</span><span style="color:#a9b7c6;">: </span><span style="color:#a9b7c6;">8080</span></div>
<div class="a mono" style="left:322px;top:512px;width:30px;height:22px;line-height:22px;font-size:12px;color:#606366;text-align:right">20</div>
<div class="a mono" style="left:412px;top:512px;height:22px;line-height:22px;font-size:13.33px;white-space:pre"><span style="color:#cc7832;">servlet</span><span style="color:#a9b7c6;">:</span></div>
<div class="a mono" style="left:322px;top:534px;width:30px;height:22px;line-height:22px;font-size:12px;color:#a4a3a3;text-align:right">21</div>
<div class="a mono" style="left:428px;top:534px;height:22px;line-height:22px;font-size:13.33px;white-space:pre"><span style="color:#629755;font-style:italic"># 应用的访问路径</span></div>
<div class="a mono" style="left:322px;top:556px;width:30px;height:22px;line-height:22px;font-size:12px;color:#606366;text-align:right">22</div>
<div class="a mono" style="left:428px;top:556px;height:22px;line-height:22px;font-size:13.33px;white-space:pre"><span style="color:#cc7832;">context-path</span><span style="color:#a9b7c6;">: </span><span style="color:#a9b7c6;">/app/demo/ruoyi/8080</span></div>
<div class="a mono" style="left:322px;top:578px;width:30px;height:22px;line-height:22px;font-size:12px;color:#606366;text-align:right">23</div>
<div class="a mono" style="left:412px;top:578px;height:22px;line-height:22px;font-size:13.33px;white-space:pre"><span style="color:#cc7832;">tomcat</span><span style="color:#a9b7c6;">:</span></div>
<div class="a mono" style="left:322px;top:600px;width:30px;height:22px;line-height:22px;font-size:12px;color:#606366;text-align:right">24</div>
<div class="a mono" style="left:428px;top:600px;height:22px;line-height:22px;font-size:13.33px;white-space:pre"><span style="color:#629755;font-style:italic"># tomcat的URI编码</span></div>
<div class="a" style="left:386px;top:383px"><svg width="10" height="12"><path d="M0.5 11.5H9.5V5L5 0.5L0.5 5Z" fill="#262626" stroke="#5a5d60"/><path d="M3 7H7" stroke="#5a5d60"/></svg></div>
<div class="a" style="left:386px;top:451px"><svg width="10" height="12"><path d="M0.5 0.5H9.5V7L5 11.5L0.5 7Z" fill="#262626" stroke="#5a5d60"/><path d="M3 5H7" stroke="#5a5d60"/></svg></div>
<div class="a" style="left:386px;top:517px"><svg width="10" height="12"><path d="M0.5 0.5H9.5V7L5 11.5L0.5 7Z" fill="#262626" stroke="#5a5d60"/><path d="M3 5H7" stroke="#5a5d60"/></svg></div>
<div class="a" style="left:386px;top:558px"><svg width="10" height="12"><path d="M0.5 11.5H9.5V5L5 0.5L0.5 5Z" fill="#262626" stroke="#5a5d60"/><path d="M3 7H7" stroke="#5a5d60"/></svg></div>
<div class="a" style="left:386px;top:583px"><svg width="10" height="12"><path d="M0.5 0.5H9.5V7L5 11.5L0.5 7Z" fill="#262626" stroke="#5a5d60"/><path d="M3 5H7" stroke="#5a5d60"/></svg></div>
<div class="a" style="left:411px;top:532px;width:1px;height:44px;background:#393939"></div>
<div class="a" style="left:411px;top:598px;width:1px;height:24px;background:#393939"></div>
<div class="a" style="left:641px;top:331px"><svg width="40" height="3"><polyline points="0.0,2.4 1.5,0.6 3.0,2.4 4.5,0.6 6.0,2.4 7.5,0.6 9.0,2.4 10.5,0.6 12.0,2.4 13.5,0.6 15.0,2.4 16.5,0.6 18.0,2.4 19.5,0.6 21.0,2.4 22.5,0.6 24.0,2.4 25.5,0.6 27.0,2.4 28.5,0.6 30.0,2.4 31.5,0.6 33.0,2.4 34.5,0.6 36.0,2.4 37.5,0.6 39.0,2.4" stroke="#5f8f4f" stroke-width="0.9" fill="none"/></svg></div>
<div class="a" style="left:508px;top:353px"><svg width="40" height="3"><polyline points="0.0,2.4 1.5,0.6 3.0,2.4 4.5,0.6 6.0,2.4 7.5,0.6 9.0,2.4 10.5,0.6 12.0,2.4 13.5,0.6 15.0,2.4 16.5,0.6 18.0,2.4 19.5,0.6 21.0,2.4 22.5,0.6 24.0,2.4 25.5,0.6 27.0,2.4 28.5,0.6 30.0,2.4 31.5,0.6 33.0,2.4 34.5,0.6 36.0,2.4 37.5,0.6 39.0,2.4" stroke="#5f8f4f" stroke-width="0.9" fill="none"/></svg></div>
<div class="a" style="left:620px;top:573px"><svg width="40" height="3"><polyline points="0.0,2.4 1.5,0.6 3.0,2.4 4.5,0.6 6.0,2.4 7.5,0.6 9.0,2.4 10.5,0.6 12.0,2.4 13.5,0.6 15.0,2.4 16.5,0.6 18.0,2.4 19.5,0.6 21.0,2.4 22.5,0.6 24.0,2.4 25.5,0.6 27.0,2.4 28.5,0.6 30.0,2.4 31.5,0.6 33.0,2.4 34.5,0.6 36.0,2.4 37.5,0.6 39.0,2.4" stroke="#5f8f4f" stroke-width="0.9" fill="none"/></svg></div>
<div class="a" style="left:904px;top:331px"><svg width="40" height="3"><polyline points="0.0,2.4 1.5,0.6 3.0,2.4 4.5,0.6 6.0,2.4 7.5,0.6 9.0,2.4 10.5,0.6 12.0,2.4 13.5,0.6 15.0,2.4 16.5,0.6 18.0,2.4 19.5,0.6 21.0,2.4 22.5,0.6 24.0,2.4 25.5,0.6 27.0,2.4 28.5,0.6 30.0,2.4 31.5,0.6 33.0,2.4 34.5,0.6 36.0,2.4 37.5,0.6 39.0,2.4" stroke="#5f8f4f" stroke-width="0.9" fill="none"/></svg></div>
<div class="a" style="left:397px;top:613px;width:207px;height:8px;background:rgba(110,110,110,.45)"></div>
<div class="a" style="left:951px;top:164px"><svg width="14" height="14"><path d="M1 6L5 10L12 2" stroke="#499c54" stroke-width="2" fill="none"/><path d="M0 12L2 10.5L4 12L6 10.5L8 12" stroke="#499c54" stroke-width="1" fill="none"/></svg></div>
<div class="a" style="left:967px;top:161.0px;line-height:20px;font-size:12px;color:#a8a9ab;white-space:pre;">12</div>
<div class="a" style="left:989px;top:167px"><svg width="10" height="7"><path d="M1 6L5 2L9 6" stroke="#a8a9ab" stroke-width="1.3" fill="none"/></svg></div>
<div class="a" style="left:1010px;top:168px"><svg width="10" height="7"><path d="M1 1L5 5L9 1" stroke="#a8a9ab" stroke-width="1.3" fill="none"/></svg></div>
</div></div>
<div class="a" style="left:326px;top:622px;width:702px;height:26px;background:#2b2b2b;border-top:1px solid #323232"></div>
<div class="a" style="left:335px;top:625.0px;line-height:20px;font-size:14px;color:#bbbcbe;white-space:pre;">Document 1/1</div>
<div class="a" style="left:437px;top:624.0px;line-height:20px;font-size:13px;color:#6b6d70;white-space:pre;">›</div>
<div class="a" style="left:450px;top:625.0px;line-height:20px;font-size:14px;color:#bbbcbe;white-space:pre;">server:</div>
<div class="a" style="left:500px;top:624.0px;line-height:20px;font-size:13px;color:#6b6d70;white-space:pre;">›</div>
<div class="a" style="left:514px;top:625.0px;line-height:20px;font-size:14px;color:#bbbcbe;white-space:pre;">servlet:</div>
<div class="a" style="left:1028px;top:131px;width:22px;height:909px;background:#313335;border-left:1px solid #2a2b2d"></div>
<div class="a" style="left:1031px;top:138px;font-size:14px;line-height:16px;font-weight:bold;font-style:italic;color:#a8a9ab">m</div>
<div class="a" style="left:1046px;top:157px;width:60px;height:16px;transform-origin:0 0;transform:rotate(90deg);font-size:11.5px;line-height:16px;color:#a8a9ab;white-space:nowrap">Maven</div>
<div class="a" style="left:1032px;top:214px"><svg width="14" height="14"><path d="M3 10V6A4 4 0 0 1 11 6V10L12 11H2Z" fill="#a8a9ab"/><circle cx="7" cy="12.5" r="1.3" fill="#a8a9ab"/><circle cx="11" cy="3" r="2.5" fill="#e05555"/></svg></div>
<div class="a" style="left:1046px;top:231px;width:80px;height:16px;transform-origin:0 0;transform:rotate(90deg);font-size:11.5px;line-height:16px;color:#a8a9ab;white-space:nowrap">Notifications</div>
<div class="a" style="left:1033px;top:569px;width:17px;height:32px;background:#1f1f1f;border-radius:4px 0 0 4px"></div>
<div class="a" style="left:1037px;top:578px"><svg width="8" height="14"><path d="M1 1L7 7L1 13" stroke="#bfc0c1" stroke-width="1.2" fill="none"/></svg></div>
<div class="a" style="left:22px;top:648px;width:1006px;height:26px;background:#343d47"></div>
<div class="a" style="left:27px;top:651.0px;line-height:20px;font-size:14px;color:#bbbcbe;white-space:pre;">Terminal:</div>
<div class="a" style="left:102px;top:651.0px;line-height:20px;font-size:14px;color:#bbbcbe;white-space:pre;">Local</div>
<div class="a" style="left:141px;top:656px"><svg width="10" height="10"><path d="M1 1L9 9M9 1L1 9" stroke="#767a7e" stroke-width="1.2"/></svg></div>
<div class="a" style="left:90px;top:671px;width:70px;height:3px;background:#4a88c7;border-radius:1.5px"></div>
<div class="a" style="left:168px;top:654px"><svg width="14" height="14"><path d="M7 1V13M1 7H13" stroke="#c8c9ca" stroke-width="1.8"/></svg></div>
<div class="a" style="left:195px;top:657px"><svg width="12" height="8"><path d="M1 1L6 6L11 1" stroke="#c8c9ca" stroke-width="1.5" fill="none"/></svg></div>
<div class="a" style="left:980px;top:653px"><svg width="16" height="16" viewBox="0 0 16 16"><path d="M12.96 6.13L14.90 5.96L14.90 10.04L12.96 9.87L12.59 10.65L12.10 11.36L13.22 12.96L9.68 15.00L8.86 13.23L8.00 13.30L7.14 13.23L6.32 15.00L2.78 12.96L3.90 11.36L3.41 10.65L3.04 9.87L1.10 10.04L1.10 5.96L3.04 6.13L3.41 5.35L3.90 4.64L2.78 3.04L6.32 1.00L7.14 2.77L8.00 2.70L8.86 2.77L9.68 1.00L13.22 3.04L12.10 4.64L12.59 5.35Z" fill="#c8c9ca"/><circle cx="8" cy="8" r="2.3" fill="#343d47"/></svg></div>
<div class="a" style="left:1007px;top:660px;width:13px;height:2px;background:#c8c9ca"></div>
<div class="a" style="left:22px;top:674px;width:1006px;height:341px;background:#262626"></div>
<div class="a mono" style="left:26px;top:677px;line-height:22px;font-size:13.4px;color:#bbbbbb;white-space:pre"><span style="color:#5fae4d">➜</span>  <span style="color:#2aa198">ruoyi</span> <span style="color:#3b8eea">git:(</span><span style="color:#e05c4f">demo</span><span style="color:#3b8eea">)</span> mysql -h mysql -u root -p</div>
<div class="a mono" style="left:26px;top:699px;line-height:22px;font-size:13.4px;color:#bbbbbb;white-space:pre">Enter password:</div>
<div class="a mono" style="left:26px;top:721px;line-height:22px;font-size:13.4px;color:#bbbbbb;white-space:pre">Welcome to the MySQL monitor.  Commands end with ; or \g.</div>
<div class="a mono" style="left:26px;top:743px;line-height:22px;font-size:13.4px;color:#bbbbbb;white-space:pre">Your MySQL connection id is 166</div>
<div class="a mono" style="left:26px;top:765px;line-height:22px;font-size:13.4px;color:#bbbbbb;white-space:pre">Server version: 5.7.37 MySQL Community Server (GPL)</div>
<div class="a mono" style="left:26px;top:809px;line-height:22px;font-size:13.4px;color:#bbbbbb;white-space:pre">Copyright (c) 2000, 2022, Oracle and/or its affiliates.</div>
<div class="a mono" style="left:26px;top:853px;line-height:22px;font-size:13.4px;color:#bbbbbb;white-space:pre">Oracle is a registered trademark of Oracle Corporation and/or its</div>
<div class="a mono" style="left:26px;top:875px;line-height:22px;font-size:13.4px;color:#bbbbbb;white-space:pre">affiliates. Other names may be trademarks of their respective</div>
<div class="a mono" style="left:26px;top:897px;line-height:22px;font-size:13.4px;color:#bbbbbb;white-space:pre">owners.</div>
<div class="a mono" style="left:26px;top:941px;line-height:22px;font-size:13.4px;color:#bbbbbb;white-space:pre">Type 'help;' or '\h' for help. Type '\c' to clear the current input statement.</div>
<div class="a mono" style="left:26px;top:985px;line-height:22px;font-size:13.4px;color:#bbbbbb;white-space:pre">mysql&gt;</div>
<div class="a" style="left:1018px;top:866px;width:8px;height:149px;background:#3f3f3f"></div>
<div class="a" style="left:0;top:1015px;width:1050px;height:25px;background:#313335;border-top:1px solid #2a2b2d"></div>
<div class="a" style="left:226px;top:1016px;width:83px;height:24px;background:#27282a"></div>
<div class="a" style="left:31px;top:1022px"><svg width="10" height="12"><circle cx="2.5" cy="2" r="1.6" fill="#afb1b3"/><circle cx="2.5" cy="10" r="1.6" fill="#afb1b3"/><circle cx="8" cy="3" r="1.6" fill="#afb1b3"/><path d="M2.5 2V10M8 3Q8 7 2.5 8" stroke="#afb1b3" stroke-width="1.3" fill="none"/></svg></div>
<div class="a" style="left:46px;top:1018.0px;line-height:20px;font-size:11.7px;color:#a8a9ab;white-space:pre;">Git</div>
<div class="a" style="left:83px;top:1023px"><svg width="12" height="10"><path d="M0 1H2M4 1H12M0 5H2M4 5H12M0 9H2M4 9H12" stroke="#afb1b3" stroke-width="1.4"/></svg></div>
<div class="a" style="left:98px;top:1018.0px;line-height:20px;font-size:11.7px;color:#a8a9ab;white-space:pre;">TODO</div>
<div class="a" style="left:151px;top:1022px"><svg width="12" height="12"><circle cx="6" cy="6" r="5.5" fill="#afb1b3"/><path d="M6 2.5V7M6 8.5V9.8" stroke="#313335" stroke-width="1.6"/></svg></div>
<div class="a" style="left:167px;top:1018.0px;line-height:20px;font-size:11.7px;color:#a8a9ab;white-space:pre;">Problems</div>
<div class="a" style="left:238px;top:1022px"><svg width="12" height="12"><rect x="0" y="0" width="12" height="12" fill="#afb1b3"/><path d="M2.5 3L5 5.5L2.5 8M6 9H9.5" stroke="#27282a" stroke-width="1.4" fill="none"/></svg></div>
<div class="a" style="left:254px;top:1018.0px;line-height:20px;font-size:11.7px;color:#d4d5d6;white-space:pre;">Terminal</div>
<div class="a" style="left:320px;top:1022px"><svg width="12" height="12"><circle cx="6" cy="6" r="5.5" fill="#afb1b3"/><path d="M4.5 3.5L8.5 6L4.5 8.5Z" fill="#313335"/></svg></div>
<div class="a" style="left:337px;top:1018.0px;line-height:20px;font-size:11.7px;color:#a8a9ab;white-space:pre;">Services</div>
<div class="a" style="left:401px;top:1021px"><svg width="13" height="13"><path d="M6.5 1L12 4L6.5 7L1 4Z" fill="none" stroke="#afb1b3" stroke-width="1.2"/><path d="M1 6.5L6.5 9.5L12 6.5M1 9L6.5 12L12 9" fill="none" stroke="#afb1b3" stroke-width="1.2"/></svg></div>
<div class="a" style="left:418px;top:1018.0px;line-height:20px;font-size:11.7px;color:#a8a9ab;white-space:pre;">Dependencies</div>
<div class="a" style="left:0;top:1040px;width:1050px;height:19px;background:#313335;border-top:1px solid #2a2b2d"></div>
<div class="a" style="left:6px;top:1044px"><svg width="12" height="12"><rect x="3" y="0.5" width="8.5" height="8.5" stroke="#8c8e90" fill="none"/><path d="M0.5 3V11.5H9" stroke="#8c8e90" fill="none"/></svg></div>
<div class="a" style="left:27px;top:1039.0px;line-height:20px;font-size:13.85px;color:#a8a9ab;white-space:pre;">Localized IntelliJ IDEA 2022.2.2 is available // Switch and restart // Don&#x27;t a... (19 minutes ago)</div>
<div class="a" style="left:635px;top:1039.0px;line-height:20px;font-size:13.5px;color:#a8a9ab;white-space:pre;">21:14</div>
<div class="a" style="left:682px;top:1039.0px;line-height:20px;font-size:13.5px;color:#a8a9ab;white-space:pre;">CRLF</div>
<div class="a" style="left:726px;top:1039.0px;line-height:20px;font-size:13.5px;color:#a8a9ab;white-space:pre;">UTF-8</div>
<div class="a" style="left:775px;top:1039.0px;line-height:20px;font-size:13.5px;color:#a8a9ab;white-space:pre;">2 spaces</div>
<div class="a" style="left:842px;top:1039.0px;line-height:20px;font-size:13.5px;color:#a8a9ab;white-space:pre;">No JSON schema</div>
<div class="a" style="left:964px;top:1043px"><svg width="10" height="13"><circle cx="2" cy="11" r="1.5" fill="#a8a9ab"/><path d="M2 0V11M8 0Q8 6 2 7" stroke="#a8a9ab" stroke-width="1.3" fill="none"/></svg></div>
<div class="a" style="left:979px;top:1039.0px;line-height:20px;font-size:13.5px;color:#a8a9ab;white-space:pre;">demo</div>
<div class="a" style="left:1023px;top:1043px"><svg width="12" height="12"><path d="M3 5V3A2.5 2.5 0 0 1 8 3" stroke="#a8a9ab" stroke-width="1.3" fill="none"/><rect x="4" y="5" width="8" height="7" fill="#a8a9ab"/></svg></div>
</div></div><div id="rpanel" class="a" style="left:1050px;top:79px;width:470px;height:980px;background:#343538;overflow:hidden">
<div class="a" style="left:-1050px;top:-79px;width:1520px;height:1059px;">
<div class="a" style="left:1071px;top:88px"><svg width="10" height="14"><path d="M2 1.5L8 7L2 12.5" stroke="#c5c6c7" stroke-width="1.4" fill="none"/></svg></div>
<div class="a" style="left:1094px;top:85.0px;line-height:20px;font-size:13px;color:#c5c6c7;white-space:pre;">设置</div>
<div class="a" style="left:1316px;top:83.0px;line-height:20px;font-size:14px;color:#a6a7a9;white-space:pre;">按 Shift 键切换输入法</div>
<div class="a" style="left:1473px;top:81px;width:25px;height:25px;border-radius:50%;background:#e0402a"></div>
<div class="a" style="left:1476px;top:81px;width:24px;height:24px;border-radius:50%;background:#f7883a;color:#fff;font-size:13px;line-height:24px;text-align:center">演</div>
<div class="a" style="left:1069px;top:120px"><svg width="14" height="10"><path d="M1.5 2L7 8L12.5 2" stroke="#c5c6c7" stroke-width="1.4" fill="none"/></svg></div>
<div class="a" style="left:1094px;top:115.0px;line-height:20px;font-size:13px;color:#c5c6c7;white-space:pre;">浏览器</div>
<div class="a" style="left:1410px;top:117px"><svg width="15" height="15"><path d="M1 6V1.5H13.5V14H9" stroke="#b5b6b8" stroke-width="1.2" fill="none"/><rect x="1" y="9" width="5" height="5" stroke="#b5b6b8" stroke-width="1.2" fill="none"/><path d="M7 8L12 3M8.5 3H12V6.5" stroke="#b5b6b8" stroke-width="1.2" fill="none"/></svg></div>
<div class="a" style="left:1430px;top:114.0px;line-height:20px;font-size:13px;color:#c5c6c7;white-space:pre;">新窗口打开</div>
<div class="a" style="left:1050px;top:140px;width:470px;height:798px;background:#dee1e6;overflow:hidden">
<div class="a" style="left:-1050px;top:-140px;width:1520px;height:1059px">
<div class="a" style="left:1058px;top:141px;width:242px;height:32px;background:#fff;border-radius:8px 8px 0 0"></div>
<div class="a" style="left:1050px;top:165px;width:8px;height:8px;background:#fff"></div><div class="a" style="left:1042px;top:157px;width:16px;height:16px;background:#dee1e6;border-radius:0 0 8px 0"></div>
<div class="a" style="left:1300px;top:165px;width:8px;height:8px;background:#fff"></div><div class="a" style="left:1300px;top:157px;width:16px;height:16px;background:#dee1e6;border-radius:0 0 0 8px"></div>
<div class="a" style="left:1071px;top:149px"><svg width="16" height="13" viewBox="0 0 46 30"><path d="M23 28C18 20 18 9 24 1C22 10 24 20 23 28Z" fill="#2a70b2" stroke="#2a70b2" stroke-width="2"/><path d="M23 28C15 25 10 17 10 7C14 16 19 23 23 28Z" fill="#2a70b2" stroke="#2a70b2" stroke-width="2"/><path d="M23 28C31 25 36 17 37 8C33 16 28 23 23 28Z" fill="#2a70b2" stroke="#2a70b2" stroke-width="2"/><path d="M23 28C14 29 5 25 0 18C8 21 15 25 23 28Z" fill="#2a70b2" stroke="#2a70b2" stroke-width="2"/><path d="M23 28C32 29 41 25 46 18C38 21 31 25 23 28Z" fill="#2a70b2" stroke="#2a70b2" stroke-width="2"/></svg></div>
<div class="a" style="left:1094px;top:146.0px;line-height:20px;font-size:13px;color:#202124;white-space:pre;">登录若依系统</div>
<div class="a" style="left:1276px;top:150px"><svg width="12" height="12"><path d="M1.5 1.5L10.5 10.5M10.5 1.5L1.5 10.5" stroke="#202124" stroke-width="2"/></svg></div>
<div class="a" style="left:1313px;top:149px"><svg width="14" height="14"><path d="M7 1V13M1 7H13" stroke="#3c4043" stroke-width="2"/></svg></div>
<div class="a" style="left:1423px;top:152px"><svg width="12" height="8"><path d="M1 1L6 6L11 1" stroke="#3c4043" stroke-width="1.8" fill="none"/></svg></div>
<div class="a" style="left:1462px;top:158px;width:11px;height:2px;background:#3c4043"></div>
<div class="a" style="left:1493px;top:150px"><svg width="12" height="12"><rect x="1" y="4" width="7" height="7" stroke="#3c4043" stroke-width="1.8" fill="#dee1e6"/><path d="M4 1H11V8" stroke="#3c4043" stroke-width="1.8" fill="none"/></svg></div>
<div class="a" style="left:1050px;top:172px;width:470px;height:40px;background:#fff;border-bottom:1px solid #e3e3e3"></div>
<div class="a" style="left:1063px;top:184px"><svg width="18" height="16"><path d="M16 8H3M8.5 2.5L3 8L8.5 13.5" stroke="#a3a6aa" stroke-width="1.8" fill="none"/></svg></div>
<div class="a" style="left:1095px;top:184px"><svg width="18" height="16"><path d="M2 8H15M9.5 2.5L15 8L9.5 13.5" stroke="#a3a6aa" stroke-width="1.8" fill="none"/></svg></div>
<div class="a" style="left:1127px;top:183px"><svg width="18" height="18"><path d="M14.2 9A5.3 5.3 0 1 1 12.6 5.2" stroke="#5f6368" stroke-width="1.9" fill="none"/><path d="M15 2V7H10Z" fill="#5f6368"/></svg></div>
<div class="a" style="left:1158px;top:177px;width:252px;height:30px;border-radius:15px;background:#f1f3f4"></div>
<div class="a" style="left:1167px;top:184px"><svg width="16" height="16"><circle cx="8" cy="8" r="6.6" stroke="#3c4043" stroke-width="1.5" fill="none"/><path d="M8 7V12M8 4V5.6" stroke="#3c4043" stroke-width="1.6"/></svg></div>
<div class="a" style="left:1192px;top:182.0px;line-height:20px;font-size:15.5px;color:#202124;white-space:pre;">localhost<span style="color:#5f6368">:8080/app/...</span></div>
<div class="a" style="left:1352px;top:184px"><svg width="16" height="16"><circle cx="12" cy="3" r="2.2" fill="#5f6368"/><circle cx="3.5" cy="8" r="2.2" fill="#5f6368"/><circle cx="12" cy="13" r="2.2" fill="#5f6368"/><path d="M12 3L3.5 8L12 13" stroke="#5f6368" stroke-width="1.4" fill="none"/></svg></div>
<div class="a" style="left:1383px;top:183px"><svg width="18" height="18"><path d="M9 1.8L11 6.6L16.2 7L12.2 10.4L13.5 15.5L9 12.7L4.5 15.5L5.8 10.4L1.8 7L7 6.6Z" stroke="#5f6368" stroke-width="1.5" fill="none" stroke-linejoin="round"/></svg></div>
<div class="a" style="left:1424px;top:184px"><svg width="16" height="16"><path d="M5 1H11M6 1V6L1.5 15H14.5L10 6V1" fill="#5f6368" stroke="#5f6368" stroke-width="1.2"/></svg></div>
<div class="a" style="left:1456px;top:185px;width:15px;height:14px;border:2px solid #5f6368"><div class="a" style="left:6px;top:0;width:5px;height:10px;background:#5f6368"></div></div>
<div class="a" style="left:1485px;top:181px;width:22px;height:22px;border-radius:50%;background:#e8eaed"></div>
<div class="a" style="left:1489px;top:185px"><svg width="14" height="14"><circle cx="7" cy="4.5" r="3" fill="#5f6368"/><path d="M1 13Q1 8.5 7 8.5Q13 8.5 13 13Z" fill="#5f6368"/></svg></div>
<div id="photo" class="a" style="left:1050px;top:213px;width:470px;height:725px;overflow:hidden;background:#d8c7a0">
<svg width="470" height="725" viewBox="0 0 470 725"><defs><linearGradient id="pg" x1="0" y1="0" x2="0" y2="1"><stop offset="0" stop-color="#d9b878"/><stop offset="0.12" stop-color="#e2c88e"/><stop offset="0.3" stop-color="#e2d1ab"/><stop offset="0.5" stop-color="#d8cab0"/><stop offset="0.72" stop-color="#cfc0a4"/><stop offset="0.86" stop-color="#c0ad90"/><stop offset="1" stop-color="#9c8a78"/></linearGradient><filter id="b2" x="-50%" y="-50%" width="200%" height="200%"><feGaussianBlur stdDeviation="2"/></filter><filter id="b4" x="-50%" y="-50%" width="200%" height="200%"><feGaussianBlur stdDeviation="4"/></filter><filter id="b8" x="-50%" y="-50%" width="200%" height="200%"><feGaussianBlur stdDeviation="8"/></filter><filter id="b14" x="-50%" y="-50%" width="200%" height="200%"><feGaussianBlur stdDeviation="14"/></filter><filter id="b24" x="-50%" y="-50%" width="200%" height="200%"><feGaussianBlur stdDeviation="24"/></filter><filter id="b40" x="-50%" y="-50%" width="200%" height="200%"><feGaussianBlur stdDeviation="40"/></filter></defs><rect width="470" height="725" fill="url(#pg)"/><ellipse cx="0" cy="95" rx="55" ry="80" fill="#9a6a48" opacity="0.9" filter="url(#b24)"/><ellipse cx="10" cy="195" rx="45" ry="40" fill="#aca68a" opacity="0.6" filter="url(#b24)"/><ellipse cx="40" cy="40" rx="70" ry="45" fill="#b88c5c" opacity="0.6" filter="url(#b24)"/><ellipse cx="180" cy="20" rx="100" ry="40" fill="#d6b272" opacity="0.6" filter="url(#b24)"/><ellipse cx="330" cy="70" rx="150" ry="100" fill="#f4e4ae" opacity="0.95" filter="url(#b40)"/><ellipse cx="455" cy="130" rx="50" ry="90" fill="#dcc088" opacity="0.6" filter="url(#b24)"/><ellipse cx="15" cy="360" rx="60" ry="130" fill="#a8a68c" opacity="0.8" filter="url(#b40)"/><ellipse cx="0" cy="560" rx="60" ry="110" fill="#8a8274" opacity="0.55" filter="url(#b40)"/><ellipse cx="330" cy="320" rx="140" ry="120" fill="#e6d8ba" opacity="0.5" filter="url(#b40)"/><ellipse cx="220" cy="540" rx="210" ry="60" fill="#d3c4a6" opacity="0.5" filter="url(#b40)"/><ellipse cx="440" cy="560" rx="60" ry="120" fill="#c4b291" opacity="0.5" filter="url(#b24)"/><ellipse cx="110" cy="700" rx="110" ry="35" fill="#7a6c70" opacity="0.35" filter="url(#b24)"/><ellipse cx="270" cy="712" rx="120" ry="30" fill="#7a6e68" opacity="0.3" filter="url(#b24)"/><ellipse cx="430" cy="700" rx="70" ry="35" fill="#6a5e66" opacity="0.35" filter="url(#b24)"/><ellipse cx="210" cy="650" rx="70" ry="40" fill="#dccdaf" opacity="0.55" filter="url(#b14)"/><ellipse cx="340" cy="630" rx="90" ry="30" fill="#d8c8a8" opacity="0.5" filter="url(#b14)"/><g filter="url(#b8)"><path d="M211 599Q218 514 205 429" stroke="#dac59c" stroke-width="3.8" fill="none" opacity="0.45"/><path d="M390 572Q364 507 349 442" stroke="#a4a27c" stroke-width="3.4" fill="none" opacity="0.45"/><path d="M393 642Q411 614 420 586" stroke="#a4a27c" stroke-width="5.5" fill="none" opacity="0.45"/><path d="M60 425Q46 365 8 306" stroke="#bfae90" stroke-width="5.4" fill="none" opacity="0.45"/><path d="M377 524Q362 461 338 398" stroke="#bfae90" stroke-width="5.0" fill="none" opacity="0.45"/><path d="M318 566Q346 523 361 480" stroke="#ece0c6" stroke-width="4.3" fill="none" opacity="0.45"/><path d="M97 512Q93 483 113 453" stroke="#a4a27c" stroke-width="4.2" fill="none" opacity="0.45"/><path d="M14 425Q-7 356 -26 286" stroke="#ece0c6" stroke-width="6.9" fill="none" opacity="0.45"/><path d="M183 443Q196 377 219 312" stroke="#948472" stroke-width="4.2" fill="none" opacity="0.45"/><path d="M-12 551Q-55 466 -74 381" stroke="#c9b48f" stroke-width="3.2" fill="none" opacity="0.45"/><path d="M386 477Q398 416 380 354" stroke="#bfae90" stroke-width="6.1" fill="none" opacity="0.45"/><path d="M194 543Q212 492 243 441" stroke="#ece0c6" stroke-width="6.9" fill="none" opacity="0.45"/><path d="M390 517Q381 435 342 352" stroke="#a4a27c" stroke-width="5.4" fill="none" opacity="0.45"/><path d="M274 433Q280 399 270 364" stroke="#ece0c6" stroke-width="4.3" fill="none" opacity="0.45"/><path d="M131 443Q119 413 136 382" stroke="#bfae90" stroke-width="4.5" fill="none" opacity="0.45"/><path d="M297 461Q329 398 339 334" stroke="#bfae90" stroke-width="3.7" fill="none" opacity="0.45"/><path d="M59 711Q29 633 19 554" stroke="#bfae90" stroke-width="5.5" fill="none" opacity="0.45"/><path d="M263 640Q259 590 261 539" stroke="#ece0c6" stroke-width="3.4" fill="none" opacity="0.45"/><path d="M-0 728Q6 688 16 647" stroke="#948472" stroke-width="6.6" fill="none" opacity="0.45"/><path d="M230 586Q263 501 312 416" stroke="#bfae90" stroke-width="5.2" fill="none" opacity="0.45"/><path d="M415 617Q440 573 451 530" stroke="#bfae90" stroke-width="3.3" fill="none" opacity="0.45"/><path d="M190 500Q186 472 178 444" stroke="#dac59c" stroke-width="3.5" fill="none" opacity="0.45"/><path d="M165 705Q179 616 193 528" stroke="#c9b48f" stroke-width="6.8" fill="none" opacity="0.45"/><path d="M281 716Q287 660 265 604" stroke="#948472" stroke-width="3.1" fill="none" opacity="0.45"/><path d="M304 574Q279 502 278 429" stroke="#ece0c6" stroke-width="5.2" fill="none" opacity="0.45"/><path d="M356 708Q366 635 386 562" stroke="#948472" stroke-width="5.7" fill="none" opacity="0.45"/><path d="M439 699Q457 647 470 595" stroke="#a4a27c" stroke-width="5.5" fill="none" opacity="0.45"/><path d="M175 606Q136 542 121 477" stroke="#c9b48f" stroke-width="4.0" fill="none" opacity="0.45"/><path d="M192 526Q207 440 226 354" stroke="#a4a27c" stroke-width="6.4" fill="none" opacity="0.45"/><path d="M23 660Q11 633 28 606" stroke="#a4a27c" stroke-width="6.8" fill="none" opacity="0.45"/><path d="M38 670Q33 602 36 534" stroke="#ece0c6" stroke-width="3.6" fill="none" opacity="0.45"/><path d="M292 586Q280 512 269 438" stroke="#a4a27c" stroke-width="4.0" fill="none" opacity="0.45"/><path d="M186 500Q218 434 227 368" stroke="#bfae90" stroke-width="4.5" fill="none" opacity="0.45"/><path d="M277 521Q284 487 277 454" stroke="#ece0c6" stroke-width="6.8" fill="none" opacity="0.45"/><path d="M121 474Q119 420 97 366" stroke="#bfae90" stroke-width="4.5" fill="none" opacity="0.45"/><path d="M245 635Q268 564 294 492" stroke="#dac59c" stroke-width="3.3" fill="none" opacity="0.45"/><path d="M-4 699Q-3 672 8 644" stroke="#dac59c" stroke-width="5.6" fill="none" opacity="0.45"/><path d="M268 625Q244 574 236 522" stroke="#948472" stroke-width="3.6" fill="none" opacity="0.45"/><path d="M4 621Q15 567 18 513" stroke="#c9b48f" stroke-width="4.5" fill="none" opacity="0.45"/><path d="M20 483Q-14 405 -19 326" stroke="#c9b48f" stroke-width="4.9" fill="none" opacity="0.45"/><path d="M344 477Q351 435 331 392" stroke="#c9b48f" stroke-width="5.0" fill="none" opacity="0.45"/><path d="M488 471Q492 391 520 311" stroke="#bfae90" stroke-width="6.7" fill="none" opacity="0.45"/><path d="M348 462Q352 407 362 353" stroke="#ece0c6" stroke-width="5.3" fill="none" opacity="0.45"/><path d="M428 675Q440 589 422 502" stroke="#c9b48f" stroke-width="3.4" fill="none" opacity="0.45"/><path d="M422 675Q402 590 358 505" stroke="#bfae90" stroke-width="6.9" fill="none" opacity="0.45"/><path d="M478 592Q475 515 451 439" stroke="#c9b48f" stroke-width="4.4" fill="none" opacity="0.45"/><path d="M22 561Q51 500 55 440" stroke="#a4a27c" stroke-width="3.9" fill="none" opacity="0.45"/><path d="M422 557Q432 530 424 503" stroke="#c9b48f" stroke-width="3.6" fill="none" opacity="0.45"/><path d="M56 585Q79 513 105 441" stroke="#c9b48f" stroke-width="6.5" fill="none" opacity="0.45"/><path d="M275 641Q264 566 266 492" stroke="#dac59c" stroke-width="5.9" fill="none" opacity="0.45"/><path d="M306 587Q316 507 315 428" stroke="#948472" stroke-width="6.8" fill="none" opacity="0.45"/><path d="M424 615Q408 570 392 525" stroke="#dac59c" stroke-width="5.3" fill="none" opacity="0.45"/><path d="M82 591Q90 534 95 476" stroke="#ece0c6" stroke-width="3.2" fill="none" opacity="0.45"/><path d="M448 594Q420 505 380 415" stroke="#ece0c6" stroke-width="3.3" fill="none" opacity="0.45"/><path d="M255 552Q284 465 329 378" stroke="#948472" stroke-width="5.0" fill="none" opacity="0.45"/><path d="M153 708Q184 622 225 537" stroke="#dac59c" stroke-width="3.8" fill="none" opacity="0.45"/><path d="M295 716Q291 683 314 649" stroke="#ece0c6" stroke-width="3.6" fill="none" opacity="0.45"/><path d="M-14 511Q-44 439 -51 367" stroke="#a4a27c" stroke-width="5.9" fill="none" opacity="0.45"/><path d="M43 583Q42 542 18 501" stroke="#dac59c" stroke-width="3.1" fill="none" opacity="0.45"/><path d="M303 684Q306 619 308 554" stroke="#c9b48f" stroke-width="3.9" fill="none" opacity="0.45"/><path d="M90 594Q71 531 44 467" stroke="#c9b48f" stroke-width="4.4" fill="none" opacity="0.45"/><path d="M72 613Q59 530 22 447" stroke="#bfae90" stroke-width="3.5" fill="none" opacity="0.45"/><path d="M102 653Q86 611 68 569" stroke="#a4a27c" stroke-width="5.8" fill="none" opacity="0.45"/><path d="M82 621Q57 544 20 467" stroke="#dac59c" stroke-width="6.6" fill="none" opacity="0.45"/><path d="M474 457Q504 399 504 341" stroke="#dac59c" stroke-width="6.3" fill="none" opacity="0.45"/><path d="M389 574Q397 548 403 521" stroke="#dac59c" stroke-width="5.3" fill="none" opacity="0.45"/><path d="M55 479Q81 441 81 403" stroke="#948472" stroke-width="3.4" fill="none" opacity="0.45"/><path d="M12 724Q23 669 41 614" stroke="#948472" stroke-width="4.7" fill="none" opacity="0.45"/><path d="M161 487Q178 438 174 389" stroke="#ece0c6" stroke-width="3.7" fill="none" opacity="0.45"/><path d="M212 657Q184 605 180 554" stroke="#bfae90" stroke-width="6.2" fill="none" opacity="0.45"/></g><ellipse cx="85" cy="680" rx="22" ry="30" fill="#3e3a5c" opacity="0.75" filter="url(#b8)"/><ellipse cx="120" cy="700" rx="30" ry="18" fill="#4a4060" opacity="0.6" filter="url(#b8)"/><ellipse cx="330" cy="690" rx="30" ry="25" fill="#5a4a50" opacity="0.55" filter="url(#b8)"/><ellipse cx="410" cy="700" rx="40" ry="22" fill="#4e3e4a" opacity="0.6" filter="url(#b8)"/><ellipse cx="240" cy="700" rx="25" ry="15" fill="#3c3a52" opacity="0.5" filter="url(#b8)"/><ellipse cx="20" cy="640" rx="20" ry="25" fill="#5a5060" opacity="0.4" filter="url(#b8)"/><ellipse cx="470" cy="660" rx="20" ry="40" fill="#6a4e50" opacity="0.5" filter="url(#b8)"/><ellipse cx="180" cy="640" rx="20" ry="20" fill="#6a6070" opacity="0.35" filter="url(#b8)"/><g filter="url(#b2)"><path d="M145 632Q194 587 239 543" stroke="#9aaa86" stroke-width="1.6" fill="none" opacity="0.65"/><path d="M278 668Q262 655 227 642" stroke="#cbb28a" stroke-width="2.0" fill="none" opacity="0.65"/><path d="M437 743Q458 710 495 676" stroke="#9aaa86" stroke-width="1.6" fill="none" opacity="0.65"/><path d="M387 662Q389 648 416 633" stroke="#c6aa8c" stroke-width="1.7" fill="none" opacity="0.65"/><path d="M470 662Q462 655 461 648" stroke="#d8c39c" stroke-width="3.2" fill="none" opacity="0.65"/><path d="M308 718Q352 709 418 699" stroke="#c6aa8c" stroke-width="1.7" fill="none" opacity="0.65"/><path d="M206 691Q216 681 240 672" stroke="#6e6a78" stroke-width="3.0" fill="none" opacity="0.65"/><path d="M261 691Q268 638 279 584" stroke="#7aa08a" stroke-width="2.5" fill="none" opacity="0.65"/><path d="M260 714Q244 663 229 613" stroke="#9aaa86" stroke-width="1.5" fill="none" opacity="0.65"/><path d="M233 706Q245 699 262 692" stroke="#58506a" stroke-width="1.8" fill="none" opacity="0.65"/><path d="M251 688Q262 671 300 655" stroke="#6e6a78" stroke-width="2.7" fill="none" opacity="0.65"/><path d="M279 709Q299 702 306 695" stroke="#8a7a62" stroke-width="1.3" fill="none" opacity="0.65"/><path d="M484 752Q491 745 512 738" stroke="#b09070" stroke-width="2.7" fill="none" opacity="0.65"/><path d="M3 634Q56 619 102 604" stroke="#bfa680" stroke-width="1.4" fill="none" opacity="0.65"/><path d="M298 684Q272 672 254 660" stroke="#d8c39c" stroke-width="1.5" fill="none" opacity="0.65"/><path d="M193 704Q220 685 229 666" stroke="#58506a" stroke-width="1.5" fill="none" opacity="0.65"/><path d="M128 638Q132 624 128 610" stroke="#58506a" stroke-width="1.9" fill="none" opacity="0.65"/><path d="M118 716Q118 691 135 666" stroke="#bfa680" stroke-width="1.7" fill="none" opacity="0.65"/><path d="M480 748Q414 736 361 724" stroke="#6e6a78" stroke-width="1.3" fill="none" opacity="0.65"/><path d="M-1 651Q16 630 29 609" stroke="#cbb28a" stroke-width="2.5" fill="none" opacity="0.65"/><path d="M170 687Q171 671 154 656" stroke="#d8c39c" stroke-width="2.1" fill="none" opacity="0.65"/><path d="M399 737Q401 702 386 666" stroke="#9aaa86" stroke-width="1.9" fill="none" opacity="0.65"/><path d="M313 758Q314 739 320 719" stroke="#cbb28a" stroke-width="1.9" fill="none" opacity="0.65"/><path d="M29 743Q24 734 0 725" stroke="#b09070" stroke-width="2.1" fill="none" opacity="0.65"/><path d="M400 621Q425 605 451 589" stroke="#6e6a78" stroke-width="2.7" fill="none" opacity="0.65"/><path d="M147 743Q150 734 163 725" stroke="#d8c39c" stroke-width="2.1" fill="none" opacity="0.65"/><path d="M283 746Q259 721 236 695" stroke="#6e6a78" stroke-width="1.6" fill="none" opacity="0.65"/><path d="M474 722Q434 694 402 665" stroke="#e6d6b4" stroke-width="2.0" fill="none" opacity="0.65"/><path d="M178 647Q207 625 232 603" stroke="#c6aa8c" stroke-width="1.6" fill="none" opacity="0.65"/><path d="M367 743Q329 729 311 716" stroke="#58506a" stroke-width="1.8" fill="none" opacity="0.65"/><path d="M-9 738Q-14 725 4 712" stroke="#58506a" stroke-width="1.4" fill="none" opacity="0.65"/><path d="M356 746Q359 742 366 737" stroke="#7aa08a" stroke-width="2.6" fill="none" opacity="0.65"/><path d="M229 747Q232 735 224 723" stroke="#8a7a62" stroke-width="2.2" fill="none" opacity="0.65"/><path d="M254 721Q295 699 344 677" stroke="#7aa08a" stroke-width="1.2" fill="none" opacity="0.65"/><path d="M173 632Q182 626 179 619" stroke="#8a7a62" stroke-width="2.8" fill="none" opacity="0.65"/><path d="M195 679Q211 662 216 646" stroke="#9aaa86" stroke-width="1.8" fill="none" opacity="0.65"/><path d="M179 694Q195 681 223 668" stroke="#d8c39c" stroke-width="1.5" fill="none" opacity="0.65"/><path d="M449 748Q389 722 339 696" stroke="#e6d6b4" stroke-width="1.6" fill="none" opacity="0.65"/><path d="M163 702Q152 680 158 657" stroke="#b09070" stroke-width="1.8" fill="none" opacity="0.65"/><path d="M68 726Q81 706 74 685" stroke="#b09070" stroke-width="2.2" fill="none" opacity="0.65"/><path d="M185 754Q211 743 241 732" stroke="#bfa680" stroke-width="1.6" fill="none" opacity="0.65"/><path d="M48 732Q94 688 131 643" stroke="#e6d6b4" stroke-width="1.7" fill="none" opacity="0.65"/><path d="M-14 686Q17 666 27 645" stroke="#c6aa8c" stroke-width="2.0" fill="none" opacity="0.65"/><path d="M374 640Q408 625 456 609" stroke="#c6aa8c" stroke-width="2.3" fill="none" opacity="0.65"/><path d="M57 728Q54 719 74 710" stroke="#cbb28a" stroke-width="1.7" fill="none" opacity="0.65"/><path d="M345 634Q344 603 340 573" stroke="#c6aa8c" stroke-width="2.2" fill="none" opacity="0.65"/><path d="M-10 646Q-10 631 7 615" stroke="#b09070" stroke-width="2.3" fill="none" opacity="0.65"/><path d="M248 642Q226 621 202 599" stroke="#d8c39c" stroke-width="3.2" fill="none" opacity="0.65"/><path d="M320 629Q307 620 295 610" stroke="#7aa08a" stroke-width="3.1" fill="none" opacity="0.65"/><path d="M403 712Q394 703 396 695" stroke="#bfa680" stroke-width="1.4" fill="none" opacity="0.65"/><path d="M374 740Q395 696 428 651" stroke="#cbb28a" stroke-width="2.0" fill="none" opacity="0.65"/><path d="M255 662Q240 643 241 625" stroke="#6e6a78" stroke-width="2.0" fill="none" opacity="0.65"/><path d="M36 663Q43 647 32 632" stroke="#b09070" stroke-width="1.4" fill="none" opacity="0.65"/><path d="M52 633Q61 619 96 605" stroke="#9aaa86" stroke-width="2.1" fill="none" opacity="0.65"/><path d="M339 634Q349 628 368 622" stroke="#d8c39c" stroke-width="2.8" fill="none" opacity="0.65"/><path d="M453 639Q430 625 417 610" stroke="#b09070" stroke-width="2.0" fill="none" opacity="0.65"/><path d="M-12 676Q53 642 92 607" stroke="#7aa08a" stroke-width="2.3" fill="none" opacity="0.65"/><path d="M113 646Q110 631 106 616" stroke="#bfa680" stroke-width="2.8" fill="none" opacity="0.65"/><path d="M401 706Q405 690 425 674" stroke="#58506a" stroke-width="2.4" fill="none" opacity="0.65"/><path d="M242 700Q265 681 285 663" stroke="#bfa680" stroke-width="1.3" fill="none" opacity="0.65"/><path d="M316 729Q311 720 314 711" stroke="#8a7a62" stroke-width="3.1" fill="none" opacity="0.65"/><path d="M164 685Q185 680 203 675" stroke="#c6aa8c" stroke-width="2.3" fill="none" opacity="0.65"/><path d="M266 657Q321 614 396 570" stroke="#c6aa8c" stroke-width="3.1" fill="none" opacity="0.65"/><path d="M-18 716Q-9 703 17 690" stroke="#cbb28a" stroke-width="2.3" fill="none" opacity="0.65"/><path d="M19 624Q32 607 65 590" stroke="#7aa08a" stroke-width="2.7" fill="none" opacity="0.65"/><path d="M412 747Q417 716 440 686" stroke="#cbb28a" stroke-width="2.1" fill="none" opacity="0.65"/><path d="M53 674Q16 652 -8 630" stroke="#6e6a78" stroke-width="3.1" fill="none" opacity="0.65"/><path d="M7 730Q42 708 71 685" stroke="#b09070" stroke-width="2.1" fill="none" opacity="0.65"/><path d="M190 707Q228 674 245 642" stroke="#b09070" stroke-width="2.1" fill="none" opacity="0.65"/><path d="M442 717Q390 703 348 689" stroke="#58506a" stroke-width="2.2" fill="none" opacity="0.65"/><path d="M194 623Q174 588 140 553" stroke="#9aaa86" stroke-width="2.4" fill="none" opacity="0.65"/><path d="M363 663Q315 652 281 641" stroke="#b09070" stroke-width="2.9" fill="none" opacity="0.65"/><path d="M476 687Q489 677 507 668" stroke="#7aa08a" stroke-width="1.7" fill="none" opacity="0.65"/><path d="M15 748Q40 700 61 652" stroke="#9aaa86" stroke-width="1.5" fill="none" opacity="0.65"/><path d="M311 679Q283 669 277 660" stroke="#cbb28a" stroke-width="2.3" fill="none" opacity="0.65"/><path d="M465 620Q452 610 443 601" stroke="#d8c39c" stroke-width="2.1" fill="none" opacity="0.65"/><path d="M251 640Q233 621 193 603" stroke="#b09070" stroke-width="1.8" fill="none" opacity="0.65"/><path d="M234 751Q240 731 227 711" stroke="#6e6a78" stroke-width="2.6" fill="none" opacity="0.65"/><path d="M10 664Q71 654 111 644" stroke="#7aa08a" stroke-width="3.2" fill="none" opacity="0.65"/><path d="M83 709Q96 704 120 700" stroke="#d8c39c" stroke-width="2.8" fill="none" opacity="0.65"/><path d="M470 658Q496 645 527 631" stroke="#b09070" stroke-width="1.5" fill="none" opacity="0.65"/><path d="M419 637Q399 605 370 573" stroke="#58506a" stroke-width="2.8" fill="none" opacity="0.65"/><path d="M170 713Q193 694 193 675" stroke="#6e6a78" stroke-width="1.6" fill="none" opacity="0.65"/><path d="M95 639Q79 628 87 618" stroke="#58506a" stroke-width="3.0" fill="none" opacity="0.65"/><path d="M-16 702Q-29 680 -30 657" stroke="#cbb28a" stroke-width="2.7" fill="none" opacity="0.65"/><path d="M105 659Q81 627 49 595" stroke="#e6d6b4" stroke-width="3.0" fill="none" opacity="0.65"/><path d="M278 620Q232 608 164 595" stroke="#7aa08a" stroke-width="1.8" fill="none" opacity="0.65"/><path d="M227 624Q253 608 266 592" stroke="#58506a" stroke-width="2.3" fill="none" opacity="0.65"/><path d="M283 728Q288 717 278 706" stroke="#58506a" stroke-width="2.8" fill="none" opacity="0.65"/><path d="M383 653Q354 632 337 611" stroke="#b09070" stroke-width="1.6" fill="none" opacity="0.65"/><path d="M475 627Q491 613 535 600" stroke="#c6aa8c" stroke-width="2.2" fill="none" opacity="0.65"/><path d="M202 682Q221 676 236 671" stroke="#cbb28a" stroke-width="2.3" fill="none" opacity="0.65"/><path d="M384 653Q385 649 367 646" stroke="#8a7a62" stroke-width="2.7" fill="none" opacity="0.65"/><path d="M378 727Q384 707 403 688" stroke="#9aaa86" stroke-width="1.5" fill="none" opacity="0.65"/><path d="M332 736Q286 712 229 688" stroke="#8a7a62" stroke-width="2.6" fill="none" opacity="0.65"/><path d="M468 638Q480 624 491 611" stroke="#b09070" stroke-width="3.2" fill="none" opacity="0.65"/><path d="M-18 677Q-56 656 -90 634" stroke="#b09070" stroke-width="1.4" fill="none" opacity="0.65"/><path d="M-3 759Q14 742 51 725" stroke="#6e6a78" stroke-width="2.9" fill="none" opacity="0.65"/><path d="M193 632Q175 613 173 593" stroke="#c6aa8c" stroke-width="1.5" fill="none" opacity="0.65"/><path d="M278 759Q298 719 294 679" stroke="#c6aa8c" stroke-width="1.6" fill="none" opacity="0.65"/><path d="M419 751Q408 746 406 742" stroke="#9aaa86" stroke-width="1.6" fill="none" opacity="0.65"/><path d="M260 643Q245 632 232 621" stroke="#6e6a78" stroke-width="2.2" fill="none" opacity="0.65"/><path d="M300 645Q308 628 306 611" stroke="#e6d6b4" stroke-width="1.9" fill="none" opacity="0.65"/><path d="M120 623Q115 613 98 604" stroke="#7aa08a" stroke-width="1.7" fill="none" opacity="0.65"/><path d="M164 641Q132 599 126 557" stroke="#d8c39c" stroke-width="1.8" fill="none" opacity="0.65"/><path d="M176 632Q158 591 131 550" stroke="#58506a" stroke-width="1.8" fill="none" opacity="0.65"/><path d="M290 688Q285 683 291 677" stroke="#bfa680" stroke-width="2.0" fill="none" opacity="0.65"/><path d="M257 639Q228 606 205 574" stroke="#7aa08a" stroke-width="3.0" fill="none" opacity="0.65"/><path d="M406 695Q369 676 349 658" stroke="#8a7a62" stroke-width="1.8" fill="none" opacity="0.65"/><path d="M156 650Q128 642 127 634" stroke="#c6aa8c" stroke-width="2.7" fill="none" opacity="0.65"/><path d="M359 712Q376 704 383 696" stroke="#8a7a62" stroke-width="3.1" fill="none" opacity="0.65"/><path d="M423 653Q382 632 341 611" stroke="#9aaa86" stroke-width="2.2" fill="none" opacity="0.65"/><path d="M455 660Q424 621 394 582" stroke="#bfa680" stroke-width="1.5" fill="none" opacity="0.65"/><path d="M319 654Q313 646 308 638" stroke="#cbb28a" stroke-width="1.7" fill="none" opacity="0.65"/><path d="M415 663Q480 648 522 633" stroke="#d8c39c" stroke-width="1.7" fill="none" opacity="0.65"/><path d="M172 739Q172 717 199 696" stroke="#d8c39c" stroke-width="1.9" fill="none" opacity="0.65"/><path d="M435 699Q441 692 454 684" stroke="#b09070" stroke-width="1.9" fill="none" opacity="0.65"/><path d="M438 624Q410 613 376 603" stroke="#e6d6b4" stroke-width="2.0" fill="none" opacity="0.65"/><path d="M192 659Q226 635 285 611" stroke="#9aaa86" stroke-width="1.5" fill="none" opacity="0.65"/><path d="M239 663Q265 655 304 646" stroke="#bfa680" stroke-width="1.7" fill="none" opacity="0.65"/><path d="M92 693Q157 682 221 672" stroke="#58506a" stroke-width="2.5" fill="none" opacity="0.65"/><path d="M260 707Q283 673 320 639" stroke="#8a7a62" stroke-width="1.4" fill="none" opacity="0.65"/><path d="M-10 733Q-6 726 -21 720" stroke="#bfa680" stroke-width="1.5" fill="none" opacity="0.65"/><path d="M297 689Q286 674 273 658" stroke="#7aa08a" stroke-width="1.7" fill="none" opacity="0.65"/><path d="M107 665Q121 660 108 655" stroke="#d8c39c" stroke-width="2.8" fill="none" opacity="0.65"/><path d="M432 663Q424 628 435 592" stroke="#e6d6b4" stroke-width="2.9" fill="none" opacity="0.65"/><path d="M424 627Q417 610 424 592" stroke="#9aaa86" stroke-width="2.5" fill="none" opacity="0.65"/><path d="M168 716Q194 709 201 702" stroke="#c6aa8c" stroke-width="2.3" fill="none" opacity="0.65"/><path d="M195 719Q219 687 260 655" stroke="#cbb28a" stroke-width="2.4" fill="none" opacity="0.65"/><path d="M129 711Q118 671 121 630" stroke="#cbb28a" stroke-width="1.7" fill="none" opacity="0.65"/><path d="M109 713Q127 705 134 696" stroke="#cbb28a" stroke-width="1.4" fill="none" opacity="0.65"/><path d="M2 660Q68 647 112 635" stroke="#8a7a62" stroke-width="2.9" fill="none" opacity="0.65"/><path d="M416 644Q408 632 412 621" stroke="#7aa08a" stroke-width="2.0" fill="none" opacity="0.65"/><path d="M295 727Q273 686 264 645" stroke="#58506a" stroke-width="2.9" fill="none" opacity="0.65"/><path d="M206 737Q231 705 278 673" stroke="#9aaa86" stroke-width="1.8" fill="none" opacity="0.65"/><path d="M-10 699Q-17 692 1 685" stroke="#bfa680" stroke-width="1.6" fill="none" opacity="0.65"/><path d="M261 698Q228 685 218 671" stroke="#7aa08a" stroke-width="1.6" fill="none" opacity="0.65"/><path d="M227 760Q241 748 263 737" stroke="#9aaa86" stroke-width="2.3" fill="none" opacity="0.65"/><path d="M264 650Q309 635 328 620" stroke="#bfa680" stroke-width="2.9" fill="none" opacity="0.65"/><path d="M487 682Q527 666 543 650" stroke="#e6d6b4" stroke-width="2.3" fill="none" opacity="0.65"/><path d="M324 658Q312 655 327 652" stroke="#b09070" stroke-width="1.6" fill="none" opacity="0.65"/><path d="M469 622Q494 593 524 565" stroke="#b09070" stroke-width="2.8" fill="none" opacity="0.65"/><path d="M402 727Q355 675 289 623" stroke="#9aaa86" stroke-width="2.0" fill="none" opacity="0.65"/><path d="M438 707Q429 703 419 698" stroke="#8a7a62" stroke-width="1.8" fill="none" opacity="0.65"/><path d="M486 708Q466 700 457 692" stroke="#7aa08a" stroke-width="1.4" fill="none" opacity="0.65"/><path d="M151 724Q155 711 175 699" stroke="#7aa08a" stroke-width="1.9" fill="none" opacity="0.65"/><path d="M59 672Q34 663 14 653" stroke="#e6d6b4" stroke-width="1.8" fill="none" opacity="0.65"/><path d="M254 753Q262 745 292 736" stroke="#c6aa8c" stroke-width="3.2" fill="none" opacity="0.65"/><path d="M199 755Q203 740 190 724" stroke="#cbb28a" stroke-width="1.3" fill="none" opacity="0.65"/><path d="M179 749Q205 718 251 687" stroke="#e6d6b4" stroke-width="2.5" fill="none" opacity="0.65"/><path d="M173 710Q177 692 185 675" stroke="#7aa08a" stroke-width="3.1" fill="none" opacity="0.65"/><path d="M452 637Q477 613 507 590" stroke="#b09070" stroke-width="2.0" fill="none" opacity="0.65"/><path d="M97 704Q97 696 100 688" stroke="#7aa08a" stroke-width="1.8" fill="none" opacity="0.65"/><path d="M4 628Q13 616 8 605" stroke="#6e6a78" stroke-width="1.8" fill="none" opacity="0.65"/><path d="M356 759Q372 750 409 742" stroke="#b09070" stroke-width="1.6" fill="none" opacity="0.65"/><path d="M451 731Q449 726 418 721" stroke="#6e6a78" stroke-width="1.3" fill="none" opacity="0.65"/><path d="M424 720Q427 708 458 696" stroke="#58506a" stroke-width="2.1" fill="none" opacity="0.65"/><path d="M229 755Q219 743 187 732" stroke="#b09070" stroke-width="1.3" fill="none" opacity="0.65"/><path d="M233 628Q302 615 354 603" stroke="#cbb28a" stroke-width="1.6" fill="none" opacity="0.65"/><path d="M150 750Q103 727 73 704" stroke="#9aaa86" stroke-width="2.0" fill="none" opacity="0.65"/><path d="M413 706Q358 656 300 606" stroke="#bfa680" stroke-width="1.8" fill="none" opacity="0.65"/><path d="M468 756Q519 738 559 720" stroke="#8a7a62" stroke-width="2.9" fill="none" opacity="0.65"/><path d="M462 712Q453 696 433 681" stroke="#cbb28a" stroke-width="2.1" fill="none" opacity="0.65"/><path d="M46 636Q47 611 76 585" stroke="#bfa680" stroke-width="1.3" fill="none" opacity="0.65"/><path d="M85 720Q123 703 154 685" stroke="#d8c39c" stroke-width="2.0" fill="none" opacity="0.65"/><path d="M398 677Q399 648 399 619" stroke="#8a7a62" stroke-width="2.0" fill="none" opacity="0.65"/><path d="M231 636Q251 622 262 607" stroke="#d8c39c" stroke-width="2.1" fill="none" opacity="0.65"/><path d="M456 674Q464 650 479 626" stroke="#d8c39c" stroke-width="1.9" fill="none" opacity="0.65"/><path d="M278 712Q280 708 297 703" stroke="#c6aa8c" stroke-width="2.0" fill="none" opacity="0.65"/><path d="M47 745Q32 735 39 725" stroke="#c6aa8c" stroke-width="2.5" fill="none" opacity="0.65"/></g><ellipse cx="418" cy="644" rx="19" ry="14" fill="#f5c82a" filter="url(#b4)"/><ellipse cx="116" cy="615" rx="20" ry="28" fill="#e0b445" opacity="0.85" filter="url(#b8)"/><ellipse cx="100" cy="432" rx="40" ry="34" fill="#f3ead6" opacity="0.92" filter="url(#b4)"/><path d="M92.3 432.3L71.8 437.3" stroke="#fbf6ea" stroke-width="1.3" opacity="0.9"/><path d="M108.0 430.8L124.7 432.1" stroke="#fbf6ea" stroke-width="1.3" opacity="0.9"/><path d="M108.0 429.5L145.1 427.6" stroke="#fbf6ea" stroke-width="1.3" opacity="0.9"/><path d="M96.1 423.0L86.2 409.3" stroke="#fbf6ea" stroke-width="1.3" opacity="0.9"/><path d="M94.8 436.1L76.7 453.4" stroke="#fbf6ea" stroke-width="1.3" opacity="0.9"/><path d="M92.1 431.0L59.4 434.4" stroke="#fbf6ea" stroke-width="1.3" opacity="0.9"/><path d="M107.9 428.5L148.5 422.2" stroke="#d8ccbc" stroke-width="1.3" opacity="0.9"/><path d="M92.7 433.3L72.6 440.4" stroke="#fbf6ea" stroke-width="1.3" opacity="0.9"/><path d="M108.0 429.9L125.7 429.7" stroke="#d8ccbc" stroke-width="1.3" opacity="0.9"/><path d="M95.6 423.4L75.2 398.5" stroke="#f4ecdc" stroke-width="1.3" opacity="0.9"/><path d="M92.1 429.1L61.1 426.3" stroke="#d8ccbc" stroke-width="1.3" opacity="0.9"/><path d="M94.5 435.8L81.0 447.2" stroke="#d8ccbc" stroke-width="1.3" opacity="0.9"/><path d="M106.6 434.5L136.8 451.5" stroke="#fbf6ea" stroke-width="1.3" opacity="0.9"/><path d="M104.0 436.9L120.4 460.1" stroke="#fbf6ea" stroke-width="1.3" opacity="0.9"/><path d="M95.9 423.2L74.5 394.2" stroke="#d8ccbc" stroke-width="1.3" opacity="0.9"/><path d="M101.3 422.1L104.4 407.3" stroke="#d8ccbc" stroke-width="1.3" opacity="0.9"/><path d="M104.5 436.6L118.8 453.7" stroke="#fbf6ea" stroke-width="1.3" opacity="0.9"/><path d="M107.5 427.3L144.4 416.3" stroke="#fbf6ea" stroke-width="1.3" opacity="0.9"/><path d="M106.2 435.1L126.9 448.7" stroke="#fbf6ea" stroke-width="1.3" opacity="0.9"/><path d="M101.3 422.1L104.3 407.8" stroke="#fbf6ea" stroke-width="1.3" opacity="0.9"/><path d="M107.3 433.3L127.5 440.6" stroke="#fbf6ea" stroke-width="1.3" opacity="0.9"/><path d="M92.0 429.5L68.0 428.3" stroke="#fbf6ea" stroke-width="1.3" opacity="0.9"/><path d="M101.4 422.1L105.2 404.5" stroke="#d8ccbc" stroke-width="1.3" opacity="0.9"/><path d="M92.2 431.7L51.4 438.9" stroke="#d8ccbc" stroke-width="1.3" opacity="0.9"/><path d="M103.8 437.0L112.8 449.9" stroke="#f4ecdc" stroke-width="1.3" opacity="0.9"/><path d="M104.7 423.5L115.8 411.7" stroke="#f4ecdc" stroke-width="1.3" opacity="0.9"/><path d="M104.9 436.3L123.9 455.8" stroke="#f4ecdc" stroke-width="1.3" opacity="0.9"/><path d="M93.3 434.4L66.8 448.8" stroke="#fbf6ea" stroke-width="1.3" opacity="0.9"/><path d="M93.2 434.1L79.2 440.7" stroke="#f4ecdc" stroke-width="1.3" opacity="0.9"/><path d="M102.3 422.3L107.8 408.2" stroke="#d8ccbc" stroke-width="1.3" opacity="0.9"/><path d="M104.4 436.7L120.9 456.8" stroke="#fbf6ea" stroke-width="1.3" opacity="0.9"/><path d="M93.4 434.5L69.5 447.6" stroke="#fbf6ea" stroke-width="1.3" opacity="0.9"/><path d="M93.8 435.1L75.5 447.3" stroke="#f4ecdc" stroke-width="1.3" opacity="0.9"/><path d="M99.5 438.0L98.2 452.8" stroke="#d8ccbc" stroke-width="1.3" opacity="0.9"/><path d="M96.2 437.0L82.6 457.5" stroke="#f4ecdc" stroke-width="1.3" opacity="0.9"/><path d="M92.7 426.7L66.3 417.0" stroke="#fbf6ea" stroke-width="1.3" opacity="0.9"/><path d="M93.7 434.9L75.0 446.6" stroke="#fbf6ea" stroke-width="1.3" opacity="0.9"/><path d="M101.5 437.9L104.9 451.9" stroke="#d8ccbc" stroke-width="1.3" opacity="0.9"/><path d="M94.0 435.3L69.4 453.0" stroke="#fbf6ea" stroke-width="1.3" opacity="0.9"/><path d="M92.4 432.4L75.9 436.5" stroke="#fbf6ea" stroke-width="1.3" opacity="0.9"/><path d="M104.1 436.8L117.6 454.7" stroke="#fbf6ea" stroke-width="1.3" opacity="0.9"/><path d="M93.5 434.7L75.9 444.9" stroke="#fbf6ea" stroke-width="1.3" opacity="0.9"/><path d="M98.2 422.2L94.3 409.4" stroke="#fbf6ea" stroke-width="1.3" opacity="0.9"/><path d="M92.0 430.8L70.2 432.6" stroke="#d8ccbc" stroke-width="1.3" opacity="0.9"/><path d="M99.2 422.0L96.4 401.5" stroke="#fbf6ea" stroke-width="1.3" opacity="0.9"/><path d="M108.0 430.4L139.4 431.5" stroke="#f4ecdc" stroke-width="1.3" opacity="0.9"/><path d="M94.7 436.0L73.7 455.1" stroke="#fbf6ea" stroke-width="1.3" opacity="0.9"/><path d="M104.3 423.2L115.8 408.9" stroke="#fbf6ea" stroke-width="1.3" opacity="0.9"/><path d="M96.8 437.3L85.3 458.8" stroke="#fbf6ea" stroke-width="1.3" opacity="0.9"/><path d="M107.6 432.6L125.0 437.3" stroke="#fbf6ea" stroke-width="1.3" opacity="0.9"/><path d="M93.2 425.7L61.9 409.6" stroke="#d8ccbc" stroke-width="1.3" opacity="0.9"/><path d="M95.2 423.6L79.7 407.1" stroke="#fbf6ea" stroke-width="1.3" opacity="0.9"/><path d="M98.2 437.8L90.7 464.5" stroke="#fbf6ea" stroke-width="1.3" opacity="0.9"/><path d="M93.6 434.8L76.2 445.3" stroke="#fbf6ea" stroke-width="1.3" opacity="0.9"/><path d="M96.2 437.1L84.8 454.2" stroke="#f4ecdc" stroke-width="1.3" opacity="0.9"/><path d="M101.9 422.2L109.7 396.4" stroke="#fbf6ea" stroke-width="1.3" opacity="0.9"/><path d="M108.0 430.0L136.7 429.9" stroke="#d8ccbc" stroke-width="1.3" opacity="0.9"/><path d="M94.3 424.4L72.8 407.0" stroke="#fbf6ea" stroke-width="1.3" opacity="0.9"/><path d="M94.8 423.9L84.2 414.0" stroke="#f4ecdc" stroke-width="1.3" opacity="0.9"/><path d="M93.0 426.2L78.8 420.1" stroke="#d8ccbc" stroke-width="1.3" opacity="0.9"/><path d="M93.0 433.9L63.7 447.4" stroke="#fbf6ea" stroke-width="1.3" opacity="0.9"/><path d="M103.7 437.1L112.2 449.7" stroke="#f4ecdc" stroke-width="1.3" opacity="0.9"/><path d="M94.2 435.6L74.4 451.0" stroke="#d8ccbc" stroke-width="1.3" opacity="0.9"/><path d="M102.5 422.4L111.2 401.3" stroke="#fbf6ea" stroke-width="1.3" opacity="0.9"/><path d="M104.1 423.1L125.0 394.3" stroke="#fbf6ea" stroke-width="1.3" opacity="0.9"/><path d="M96.0 423.1L80.8 401.9" stroke="#fbf6ea" stroke-width="1.3" opacity="0.9"/><path d="M97.7 422.3L90.0 402.1" stroke="#fbf6ea" stroke-width="1.3" opacity="0.9"/><path d="M107.1 426.2L126.0 418.2" stroke="#d8ccbc" stroke-width="1.3" opacity="0.9"/><path d="M96.4 437.1L87.6 451.0" stroke="#fbf6ea" stroke-width="1.3" opacity="0.9"/><path d="M104.5 436.6L117.5 451.9" stroke="#d8ccbc" stroke-width="1.3" opacity="0.9"/><path d="M107.8 431.6L134.5 435.9" stroke="#d8ccbc" stroke-width="1.3" opacity="0.9"/><path d="M102.5 437.6L113.0 464.2" stroke="#d8ccbc" stroke-width="1.3" opacity="0.9"/><path d="M92.0 430.3L58.1 431.4" stroke="#d8ccbc" stroke-width="1.3" opacity="0.9"/><path d="M92.0 429.4L63.6 427.8" stroke="#f4ecdc" stroke-width="1.3" opacity="0.9"/><path d="M101.1 422.1L104.7 402.7" stroke="#fbf6ea" stroke-width="1.3" opacity="0.9"/><path d="M95.5 436.6L83.9 449.8" stroke="#fbf6ea" stroke-width="1.3" opacity="0.9"/><path d="M94.3 435.6L67.9 456.6" stroke="#d8ccbc" stroke-width="1.3" opacity="0.9"/><path d="M92.3 432.3L62.4 439.8" stroke="#d8ccbc" stroke-width="1.3" opacity="0.9"/><path d="M95.0 436.2L75.4 455.9" stroke="#d8ccbc" stroke-width="1.3" opacity="0.9"/><path d="M97.7 422.3L90.2 402.1" stroke="#fbf6ea" stroke-width="1.3" opacity="0.9"/><path d="M97.4 422.4L90.2 405.8" stroke="#fbf6ea" stroke-width="1.3" opacity="0.9"/><path d="M95.3 436.4L79.5 453.8" stroke="#fbf6ea" stroke-width="1.3" opacity="0.9"/><path d="M99.6 438.0L98.9 451.8" stroke="#fbf6ea" stroke-width="1.3" opacity="0.9"/><path d="M94.3 435.6L69.4 455.2" stroke="#d8ccbc" stroke-width="1.3" opacity="0.9"/><path d="M106.7 425.6L121.5 418.1" stroke="#f4ecdc" stroke-width="1.3" opacity="0.9"/><path d="M107.9 428.8L147.1 423.8" stroke="#d8ccbc" stroke-width="1.3" opacity="0.9"/><path d="M93.9 435.2L79.5 445.0" stroke="#f4ecdc" stroke-width="1.3" opacity="0.9"/><path d="M100.2 422.0L100.5 407.3" stroke="#fbf6ea" stroke-width="1.3" opacity="0.9"/><path d="M92.0 430.0L72.1 429.9" stroke="#fbf6ea" stroke-width="1.3" opacity="0.9"/><path d="M92.7 426.7L65.1 416.5" stroke="#fbf6ea" stroke-width="1.3" opacity="0.9"/><path d="M92.0 430.5L64.5 432.0" stroke="#fbf6ea" stroke-width="1.3" opacity="0.9"/><path d="M102.7 422.5L109.1 408.8" stroke="#f4ecdc" stroke-width="1.3" opacity="0.9"/><path d="M101.6 437.8L105.7 454.3" stroke="#fbf6ea" stroke-width="1.3" opacity="0.9"/><path d="M105.8 435.5L131.8 455.7" stroke="#f4ecdc" stroke-width="1.3" opacity="0.9"/><path d="M106.5 425.3L138.7 405.9" stroke="#fbf6ea" stroke-width="1.3" opacity="0.9"/><path d="M94.7 436.0L68.0 461.2" stroke="#fbf6ea" stroke-width="1.3" opacity="0.9"/><path d="M93.8 425.0L64.5 405.6" stroke="#fbf6ea" stroke-width="1.3" opacity="0.9"/><path d="M106.2 435.1L125.6 448.1" stroke="#f4ecdc" stroke-width="1.3" opacity="0.9"/><path d="M92.2 428.1L70.2 424.0" stroke="#fbf6ea" stroke-width="1.3" opacity="0.9"/><path d="M98.2 437.8L91.2 461.9" stroke="#fbf6ea" stroke-width="1.3" opacity="0.9"/><path d="M92.0 430.8L69.1 432.5" stroke="#fbf6ea" stroke-width="1.3" opacity="0.9"/><path d="M102.2 422.3L113.1 390.3" stroke="#f4ecdc" stroke-width="1.3" opacity="0.9"/><path d="M105.6 424.3L119.8 412.9" stroke="#f4ecdc" stroke-width="1.3" opacity="0.9"/><path d="M93.8 424.9L70.5 409.4" stroke="#f4ecdc" stroke-width="1.3" opacity="0.9"/><path d="M92.2 428.3L59.8 422.5" stroke="#fbf6ea" stroke-width="1.3" opacity="0.9"/><path d="M97.2 437.5L87.8 458.0" stroke="#fbf6ea" stroke-width="1.3" opacity="0.9"/><path d="M95.4 423.5L78.0 403.6" stroke="#d8ccbc" stroke-width="1.3" opacity="0.9"/><path d="M92.3 432.3L67.8 438.4" stroke="#f4ecdc" stroke-width="1.3" opacity="0.9"/><path d="M107.5 427.2L134.8 419.0" stroke="#fbf6ea" stroke-width="1.3" opacity="0.9"/><path d="M106.0 424.7L119.5 415.5" stroke="#fbf6ea" stroke-width="1.3" opacity="0.9"/><ellipse cx="102" cy="442" rx="14" ry="10" fill="#a89a90" opacity="0.4" filter="url(#b4)"/><path d="M215 350Q250 450 300 560" stroke="#a8a070" stroke-width="6" fill="none" opacity="0.5" filter="url(#b4)"/><path d="M225 360Q235 420 232 520" stroke="#98a078" stroke-width="4" fill="none" opacity="0.4" filter="url(#b4)"/><path d="M104 472Q101 560 98 660" stroke="#9a8a52" stroke-width="2" fill="none"/><path d="M100 640Q112 580 122 532" stroke="#6f9a4a" stroke-width="2.2" fill="none"/><path d="M124 530Q121 512 127 497" stroke="#38402c" stroke-width="7" fill="none" stroke-linecap="round"/><path d="M126 496L132 478M128 494L122 480" stroke="#e0a030" stroke-width="3" stroke-linecap="round"/><path d="M272 734Q265 718 240 702" stroke="#98ac88" stroke-width="1.0" fill="none" opacity="0.55"/><path d="M170 688Q177 674 202 660" stroke="#cdb892" stroke-width="1.3" fill="none" opacity="0.55"/><path d="M472 715Q496 683 522 651" stroke="#e0d0b0" stroke-width="1.3" fill="none" opacity="0.55"/><path d="M32 716Q61 683 93 650" stroke="#e0d0b0" stroke-width="1.2" fill="none" opacity="0.55"/><path d="M29 699Q68 674 92 650" stroke="#cdb892" stroke-width="1.0" fill="none" opacity="0.55"/><path d="M98 682Q106 665 101 648" stroke="#cdb892" stroke-width="1.5" fill="none" opacity="0.55"/><path d="M-0 699Q9 673 26 646" stroke="#98ac88" stroke-width="0.9" fill="none" opacity="0.55"/><path d="M367 673Q340 646 294 618" stroke="#6a5e6c" stroke-width="0.8" fill="none" opacity="0.55"/><path d="M6 726Q13 698 9 669" stroke="#b8a080" stroke-width="0.8" fill="none" opacity="0.55"/><path d="M23 724Q50 692 89 660" stroke="#6a5e6c" stroke-width="1.1" fill="none" opacity="0.55"/><path d="M430 679Q430 667 423 656" stroke="#98ac88" stroke-width="1.2" fill="none" opacity="0.55"/><path d="M105 731Q86 720 78 709" stroke="#8a7862" stroke-width="1.5" fill="none" opacity="0.55"/><path d="M81 714Q95 688 94 662" stroke="#98ac88" stroke-width="0.9" fill="none" opacity="0.55"/><path d="M104 684Q116 664 126 644" stroke="#cdb892" stroke-width="0.9" fill="none" opacity="0.55"/><path d="M364 680Q364 659 357 638" stroke="#6a5e6c" stroke-width="0.9" fill="none" opacity="0.55"/><path d="M26 727Q15 687 10 647" stroke="#cdb892" stroke-width="1.4" fill="none" opacity="0.55"/><path d="M176 683Q184 659 210 635" stroke="#e0d0b0" stroke-width="0.8" fill="none" opacity="0.55"/><path d="M458 694Q451 685 426 676" stroke="#8a7862" stroke-width="1.5" fill="none" opacity="0.55"/><path d="M158 734Q160 717 173 700" stroke="#cdb892" stroke-width="1.4" fill="none" opacity="0.55"/><path d="M106 728Q114 700 137 671" stroke="#b8a080" stroke-width="1.0" fill="none" opacity="0.55"/><path d="M450 666Q441 657 438 649" stroke="#6a5e6c" stroke-width="1.3" fill="none" opacity="0.55"/><path d="M124 702Q128 664 114 626" stroke="#6a5e6c" stroke-width="0.9" fill="none" opacity="0.55"/><path d="M99 666Q106 643 124 620" stroke="#98ac88" stroke-width="1.6" fill="none" opacity="0.55"/><path d="M303 668Q329 645 351 622" stroke="#6a5e6c" stroke-width="1.5" fill="none" opacity="0.55"/><path d="M218 675Q262 655 309 636" stroke="#98ac88" stroke-width="0.8" fill="none" opacity="0.55"/><path d="M70 674Q45 657 24 641" stroke="#cdb892" stroke-width="1.6" fill="none" opacity="0.55"/><path d="M290 665Q282 658 281 652" stroke="#e0d0b0" stroke-width="1.5" fill="none" opacity="0.55"/><path d="M265 715Q284 704 287 693" stroke="#cdb892" stroke-width="1.3" fill="none" opacity="0.55"/><path d="M194 703Q188 675 174 647" stroke="#cdb892" stroke-width="1.3" fill="none" opacity="0.55"/><path d="M427 713Q439 684 434 655" stroke="#cdb892" stroke-width="1.1" fill="none" opacity="0.55"/><path d="M262 692Q253 662 237 631" stroke="#b8a080" stroke-width="1.1" fill="none" opacity="0.55"/><path d="M264 700Q269 670 267 641" stroke="#e0d0b0" stroke-width="1.1" fill="none" opacity="0.55"/><path d="M234 728Q204 708 174 688" stroke="#b8a080" stroke-width="1.3" fill="none" opacity="0.55"/><path d="M465 682Q443 657 417 631" stroke="#cdb892" stroke-width="1.1" fill="none" opacity="0.55"/><path d="M10 676Q-9 653 -47 631" stroke="#e0d0b0" stroke-width="1.2" fill="none" opacity="0.55"/><path d="M226 683Q229 657 227 630" stroke="#cdb892" stroke-width="1.4" fill="none" opacity="0.55"/><path d="M209 684Q185 663 153 643" stroke="#b8a080" stroke-width="1.4" fill="none" opacity="0.55"/><path d="M383 674Q375 651 349 627" stroke="#e0d0b0" stroke-width="1.3" fill="none" opacity="0.55"/><path d="M221 712Q223 675 206 639" stroke="#e0d0b0" stroke-width="0.9" fill="none" opacity="0.55"/><path d="M117 683Q114 662 91 641" stroke="#6a5e6c" stroke-width="1.3" fill="none" opacity="0.55"/><path d="M51 718Q64 705 73 693" stroke="#e0d0b0" stroke-width="1.6" fill="none" opacity="0.55"/><path d="M303 699Q295 688 287 677" stroke="#cdb892" stroke-width="1.6" fill="none" opacity="0.55"/><path d="M103 709Q87 698 80 687" stroke="#8a7862" stroke-width="0.9" fill="none" opacity="0.55"/><path d="M307 715Q287 669 275 623" stroke="#e0d0b0" stroke-width="1.6" fill="none" opacity="0.55"/><path d="M293 737Q289 713 266 690" stroke="#98ac88" stroke-width="0.9" fill="none" opacity="0.55"/><path d="M37 716Q39 706 52 696" stroke="#6a5e6c" stroke-width="1.3" fill="none" opacity="0.55"/><path d="M108 686Q102 677 81 668" stroke="#98ac88" stroke-width="1.5" fill="none" opacity="0.55"/><path d="M250 677Q270 633 305 588" stroke="#e0d0b0" stroke-width="1.1" fill="none" opacity="0.55"/><path d="M326 721Q337 689 345 657" stroke="#6a5e6c" stroke-width="1.1" fill="none" opacity="0.55"/><path d="M-4 667Q16 652 34 637" stroke="#cdb892" stroke-width="1.0" fill="none" opacity="0.55"/><ellipse cx="78" cy="560" rx="5" ry="22.0" fill="#dcc0b0" opacity="0.75" filter="url(#b2)"/><ellipse cx="110" cy="568" rx="5" ry="17.0" fill="#dcc0b0" opacity="0.75" filter="url(#b2)"/><ellipse cx="300" cy="570" rx="5" ry="20.0" fill="#dcc0b0" opacity="0.75" filter="url(#b2)"/><ellipse cx="350" cy="600" rx="5" ry="15.0" fill="#dcc0b0" opacity="0.75" filter="url(#b2)"/><path d="M0 641Q40 605 75 574" stroke="#2f2a28" stroke-width="1.8" fill="none" filter="url(#b2)" opacity="0.9"/><path d="M46 560Q75 600 102 662" stroke="#3a3430" stroke-width="2" fill="none" filter="url(#b2)" opacity="0.8"/></svg>
</div>
<div class="a" style="left:1133px;top:274px"><svg width="46" height="30" viewBox="0 0 46 30"><g fill="#2a6fb0"><path d="M23 27C17 21 18 9 24 0C21 10 27 20 23 27Z"/><path d="M22 27C13 24 10 15 12 6C14 15 21 21 22 27Z"/><path d="M24 27C31 23 35 15 35 7C31 15 26 21 24 27Z"/><path d="M22 28C13 29 5 25 0 19C8 21 15 24 22 28Z"/><path d="M24 28C33 29 40 25 45 19C37 21 31 24 24 28Z"/></g></svg></div>
<div class="a" style="left:1179px;top:273.0px;line-height:30px;font-size:27px;color:#2a6fb0;white-space:pre;font-weight:bold;letter-spacing:1px">若 依</div>
<div class="a" style="left:1179px;top:301.0px;line-height:6px;font-size:5px;color:#2b72b4;white-space:pre;">你若不离不弃，我必生死相依</div>
<div class="a" style="left:1130px;top:340.0px;line-height:20px;font-size:14px;color:#ffffff;white-space:pre;font-weight:bold">欢迎使用 若依 后台管理系统</div>
<div class="a" style="left:1130px;top:378px;width:340px;height:353px;border:1px solid rgba(255,255,255,.45);border-radius:3px;background:rgba(255,255,255,.18)"></div>
<div class="a" style="left:1161px;top:406.0px;line-height:20px;font-size:14px;color:#ffffff;white-space:pre;font-weight:bold">登录：</div>
<div class="a" style="left:1161px;top:443.0px;line-height:20px;font-size:13px;color:rgba(255,255,255,.9);white-space:pre;">你若不离不弃，我必生死相依</div>
<div class="a" style="left:1161px;top:479px;width:278px;height:32px;background:#fff"></div>
<div class="a" style="left:1174px;top:485.0px;line-height:20px;font-size:14px;color:#333;white-space:pre;">admin</div>
<div class="a" style="left:1409px;top:487px"><svg width="16" height="16"><circle cx="8" cy="5" r="3.6" fill="#333"/><path d="M1 15Q1 9.5 8 9.5Q15 9.5 15 15Z" fill="#333"/></svg></div>
<div class="a" style="left:1161px;top:528px;width:278px;height:32px;background:#fff"></div>
<div class="a" style="left:1173px;top:534.0px;line-height:20px;font-size:15px;color:#222;white-space:pre;letter-spacing:-0.4px">••••••••</div>
<div class="a" style="left:1410px;top:535px"><svg width="16" height="17"><path d="M4 8V5A4 4 0 0 1 12 5V8" stroke="#333" stroke-width="2" fill="none"/><rect x="1.5" y="8" width="13" height="9" fill="#333"/><circle cx="8" cy="12" r="1.5" fill="#fff"/></svg></div>
<div class="a" style="left:1161px;top:577px;width:124px;height:32px;background:#fff"></div>
<div class="a" style="left:1174px;top:583.0px;line-height:20px;font-size:14px;color:#999;white-space:pre;">验证码</div>
<div class="a" style="left:1315px;top:576px;width:105px;height:40px;border:1px solid #6a9a5a;background:linear-gradient(90deg,#b9b9be,#e2e2e6 55%,#f6f6f8)"></div>
<div class="a" style="left:1330px;top:582px"><svg width="70" height="30"><g transform="translate(1,2)" opacity="0.35"><path d="M8 8Q0 10 6 22Q12 20 8 8M17 6L13 24M22 9Q30 4 30 11Q27 14 30 17Q30 24 21 22M36 13L44 11M37 18L45 16M49 8Q57 3 57 10Q52 15 54 21M55 25L56 26" stroke="#333" stroke-width="4" fill="none" stroke-linecap="round"/></g><path d="M8 8Q0 10 6 22Q12 20 8 8M17 6L13 24M22 9Q30 4 30 11Q27 14 30 17Q30 24 21 22M36 13L44 11M37 18L45 16M49 8Q57 3 57 10Q52 15 54 21M55 25L56 26" stroke="#0c22c8" stroke-width="3.6" fill="none" stroke-linecap="round"/></svg></div>
<div class="a" style="left:1161px;top:625px;width:18px;height:18px;background:#fff;border:1px solid #ccc;border-radius:2px"></div>
<div class="a" style="left:1188px;top:623.0px;line-height:20px;font-size:13px;color:#ffffff;white-space:pre;">记住我</div>
<div class="a" style="left:1161px;top:666px;width:278px;height:34px;background:#2a78c0;border-radius:3px"></div>
<div class="a" style="left:1286px;top:673.0px;line-height:20px;font-size:14px;color:#ffffff;white-space:pre;">登录</div>
<div class="a" style="left:1130px;top:750px;width:340px;height:1px;background:rgba(255,255,255,.45)"></div>
<div class="a" style="left:1146px;top:765.0px;line-height:20px;font-size:13px;color:rgba(255,255,255,.92);white-space:pre;">Copyright © 2018-2022 ruoyi.vip All Rights Reserved.</div>
<div class="a" style="left:1124px;top:803px"><svg width="12" height="19"><path d="M1 1V16L4.5 12.5L7 18L9 17L6.5 11.5H11Z" fill="#111" stroke="#fff" stroke-width="1"/></svg></div>
</div></div>
<div class="a" style="left:1071px;top:947px"><svg width="10" height="14"><path d="M2 1.5L8 7L2 12.5" stroke="#c5c6c7" stroke-width="1.4" fill="none"/></svg></div>
<div class="a" style="left:1094px;top:944.0px;line-height:20px;font-size:13px;color:#c5c6c7;white-space:pre;">文件</div>
<div class="a" style="left:1071px;top:977px"><svg width="10" height="14"><path d="M2 1.5L8 7L2 12.5" stroke="#c5c6c7" stroke-width="1.4" fill="none"/></svg></div>
<div class="a" style="left:1094px;top:974.0px;line-height:20px;font-size:13px;color:#c5c6c7;white-space:pre;">端口</div>
<div class="a" style="left:1071px;top:1007px"><svg width="10" height="14"><path d="M2 1.5L8 7L2 12.5" stroke="#c5c6c7" stroke-width="1.4" fill="none"/></svg></div>
<div class="a" style="left:1094px;top:1004.0px;line-height:20px;font-size:13px;color:#c5c6c7;white-space:pre;">Git</div>
<div class="a" style="left:1071px;top:1037px"><svg width="10" height="14"><path d="M2 1.5L8 7L2 12.5" stroke="#c5c6c7" stroke-width="1.4" fill="none"/></svg></div>
<div class="a" style="left:1094px;top:1034.0px;line-height:20px;font-size:13px;color:#c5c6c7;white-space:pre;">服务</div>
<div class="a" style="left:1450px;top:1007px"><svg width="14" height="14"><path d="M1 1H13V9H8V13H1Z" stroke="#c5c6c7" stroke-width="1.3" fill="none"/><path d="M4 4H6M4 7H6M9 4H11M4 10H6" stroke="#c5c6c7" stroke-width="1.3"/></svg></div>
<div class="a" style="left:1469px;top:1004.0px;line-height:20px;font-size:13px;color:#c5c6c7;white-space:pre;">克隆</div>
</div></div><div class="a" style="left:36px;top:132px;width:160px;height:20px;line-height:20px;text-align:center;font-family:&quot;Liberation Serif&quot;,serif;font-size:16px;color:rgba(79,79,79,.22);transform:rotate(-21.8deg);white-space:nowrap;pointer-events:none">demo@titanide.cn</div>
<div class="a" style="left:36px;top:331px;width:160px;height:20px;line-height:20px;text-align:center;font-family:&quot;Liberation Serif&quot;,serif;font-size:16px;color:rgba(79,79,79,.22);transform:rotate(-21.8deg);white-space:nowrap;pointer-events:none">demo@titanide.cn</div>
<div class="a" style="left:36px;top:530px;width:160px;height:20px;line-height:20px;text-align:center;font-family:&quot;Liberation Serif&quot;,serif;font-size:16px;color:rgba(79,79,79,.22);transform:rotate(-21.8deg);white-space:nowrap;pointer-events:none">demo@titanide.cn</div>
<div class="a" style="left:36px;top:729px;width:160px;height:20px;line-height:20px;text-align:center;font-family:&quot;Liberation Serif&quot;,serif;font-size:16px;color:rgba(79,79,79,.22);transform:rotate(-21.8deg);white-space:nowrap;pointer-events:none">demo@titanide.cn</div>
<div class="a" style="left:36px;top:928px;width:160px;height:20px;line-height:20px;text-align:center;font-family:&quot;Liberation Serif&quot;,serif;font-size:16px;color:rgba(79,79,79,.22);transform:rotate(-21.8deg);white-space:nowrap;pointer-events:none">demo@titanide.cn</div>
<div class="a" style="left:436px;top:132px;width:160px;height:20px;line-height:20px;text-align:center;font-family:&quot;Liberation Serif&quot;,serif;font-size:16px;color:rgba(79,79,79,.22);transform:rotate(-21.8deg);white-space:nowrap;pointer-events:none">demo@titanide.cn</div>
<div class="a" style="left:436px;top:331px;width:160px;height:20px;line-height:20px;text-align:center;font-family:&quot;Liberation Serif&quot;,serif;font-size:16px;color:rgba(79,79,79,.22);transform:rotate(-21.8deg);white-space:nowrap;pointer-events:none">demo@titanide.cn</div>
<div class="a" style="left:436px;top:530px;width:160px;height:20px;line-height:20px;text-align:center;font-family:&quot;Liberation Serif&quot;,serif;font-size:16px;color:rgba(79,79,79,.22);transform:rotate(-21.8deg);white-space:nowrap;pointer-events:none">demo@titanide.cn</div>
<div class="a" style="left:436px;top:729px;width:160px;height:20px;line-height:20px;text-align:center;font-family:&quot;Liberation Serif&quot;,serif;font-size:16px;color:rgba(79,79,79,.22);transform:rotate(-21.8deg);white-space:nowrap;pointer-events:none">demo@titanide.cn</div>
<div class="a" style="left:436px;top:928px;width:160px;height:20px;line-height:20px;text-align:center;font-family:&quot;Liberation Serif&quot;,serif;font-size:16px;color:rgba(79,79,79,.22);transform:rotate(-21.8deg);white-space:nowrap;pointer-events:none">demo@titanide.cn</div>
<div class="a" style="left:836px;top:132px;width:160px;height:20px;line-height:20px;text-align:center;font-family:&quot;Liberation Serif&quot;,serif;font-size:16px;color:rgba(79,79,79,.22);transform:rotate(-21.8deg);white-space:nowrap;pointer-events:none">demo@titanide.cn</div>
<div class="a" style="left:836px;top:331px;width:160px;height:20px;line-height:20px;text-align:center;font-family:&quot;Liberation Serif&quot;,serif;font-size:16px;color:rgba(79,79,79,.22);transform:rotate(-21.8deg);white-space:nowrap;pointer-events:none">demo@titanide.cn</div>
<div class="a" style="left:836px;top:530px;width:160px;height:20px;line-height:20px;text-align:center;font-family:&quot;Liberation Serif&quot;,serif;font-size:16px;color:rgba(79,79,79,.22);transform:rotate(-21.8deg);white-space:nowrap;pointer-events:none">demo@titanide.cn</div>
<div class="a" style="left:836px;top:729px;width:160px;height:20px;line-height:20px;text-align:center;font-family:&quot;Liberation Serif&quot;,serif;font-size:16px;color:rgba(79,79,79,.22);transform:rotate(-21.8deg);white-space:nowrap;pointer-events:none">demo@titanide.cn</div>
<div class="a" style="left:836px;top:928px;width:160px;height:20px;line-height:20px;text-align:center;font-family:&quot;Liberation Serif&quot;,serif;font-size:16px;color:rgba(79,79,79,.22);transform:rotate(-21.8deg);white-space:nowrap;pointer-events:none">demo@titanide.cn</div>
<div class="a" style="left:1236px;top:132px;width:160px;height:20px;line-height:20px;text-align:center;font-family:&quot;Liberation Serif&quot;,serif;font-size:16px;color:rgba(79,79,79,.22);transform:rotate(-21.8deg);white-space:nowrap;pointer-events:none">demo@titanide.cn</div>
<div class="a" style="left:1236px;top:331px;width:160px;height:20px;line-height:20px;text-align:center;font-family:&quot;Liberation Serif&quot;,serif;font-size:16px;color:rgba(79,79,79,.22);transform:rotate(-21.8deg);white-space:nowrap;pointer-events:none">demo@titanide.cn</div>
<div class="a" style="left:1236px;top:530px;width:160px;height:20px;line-height:20px;text-align:center;font-family:&quot;Liberation Serif&quot;,serif;font-size:16px;color:rgba(79,79,79,.22);transform:rotate(-21.8deg);white-space:nowrap;pointer-events:none">demo@titanide.cn</div>
<div class="a" style="left:1236px;top:729px;width:160px;height:20px;line-height:20px;text-align:center;font-family:&quot;Liberation Serif&quot;,serif;font-size:16px;color:rgba(79,79,79,.22);transform:rotate(-21.8deg);white-space:nowrap;pointer-events:none">demo@titanide.cn</div>
<div class="a" style="left:1236px;top:928px;width:160px;height:20px;line-height:20px;text-align:center;font-family:&quot;Liberation Serif&quot;,serif;font-size:16px;color:rgba(79,79,79,.22);transform:rotate(-21.8deg);white-space:nowrap;pointer-events:none">demo@titanide.cn</div><div class="a" style="left:0;top:0;width:1520px;height:1059px;border:1px solid #68686a;border-radius:10px;pointer-events:none"></div>
</div>
</body></html>
